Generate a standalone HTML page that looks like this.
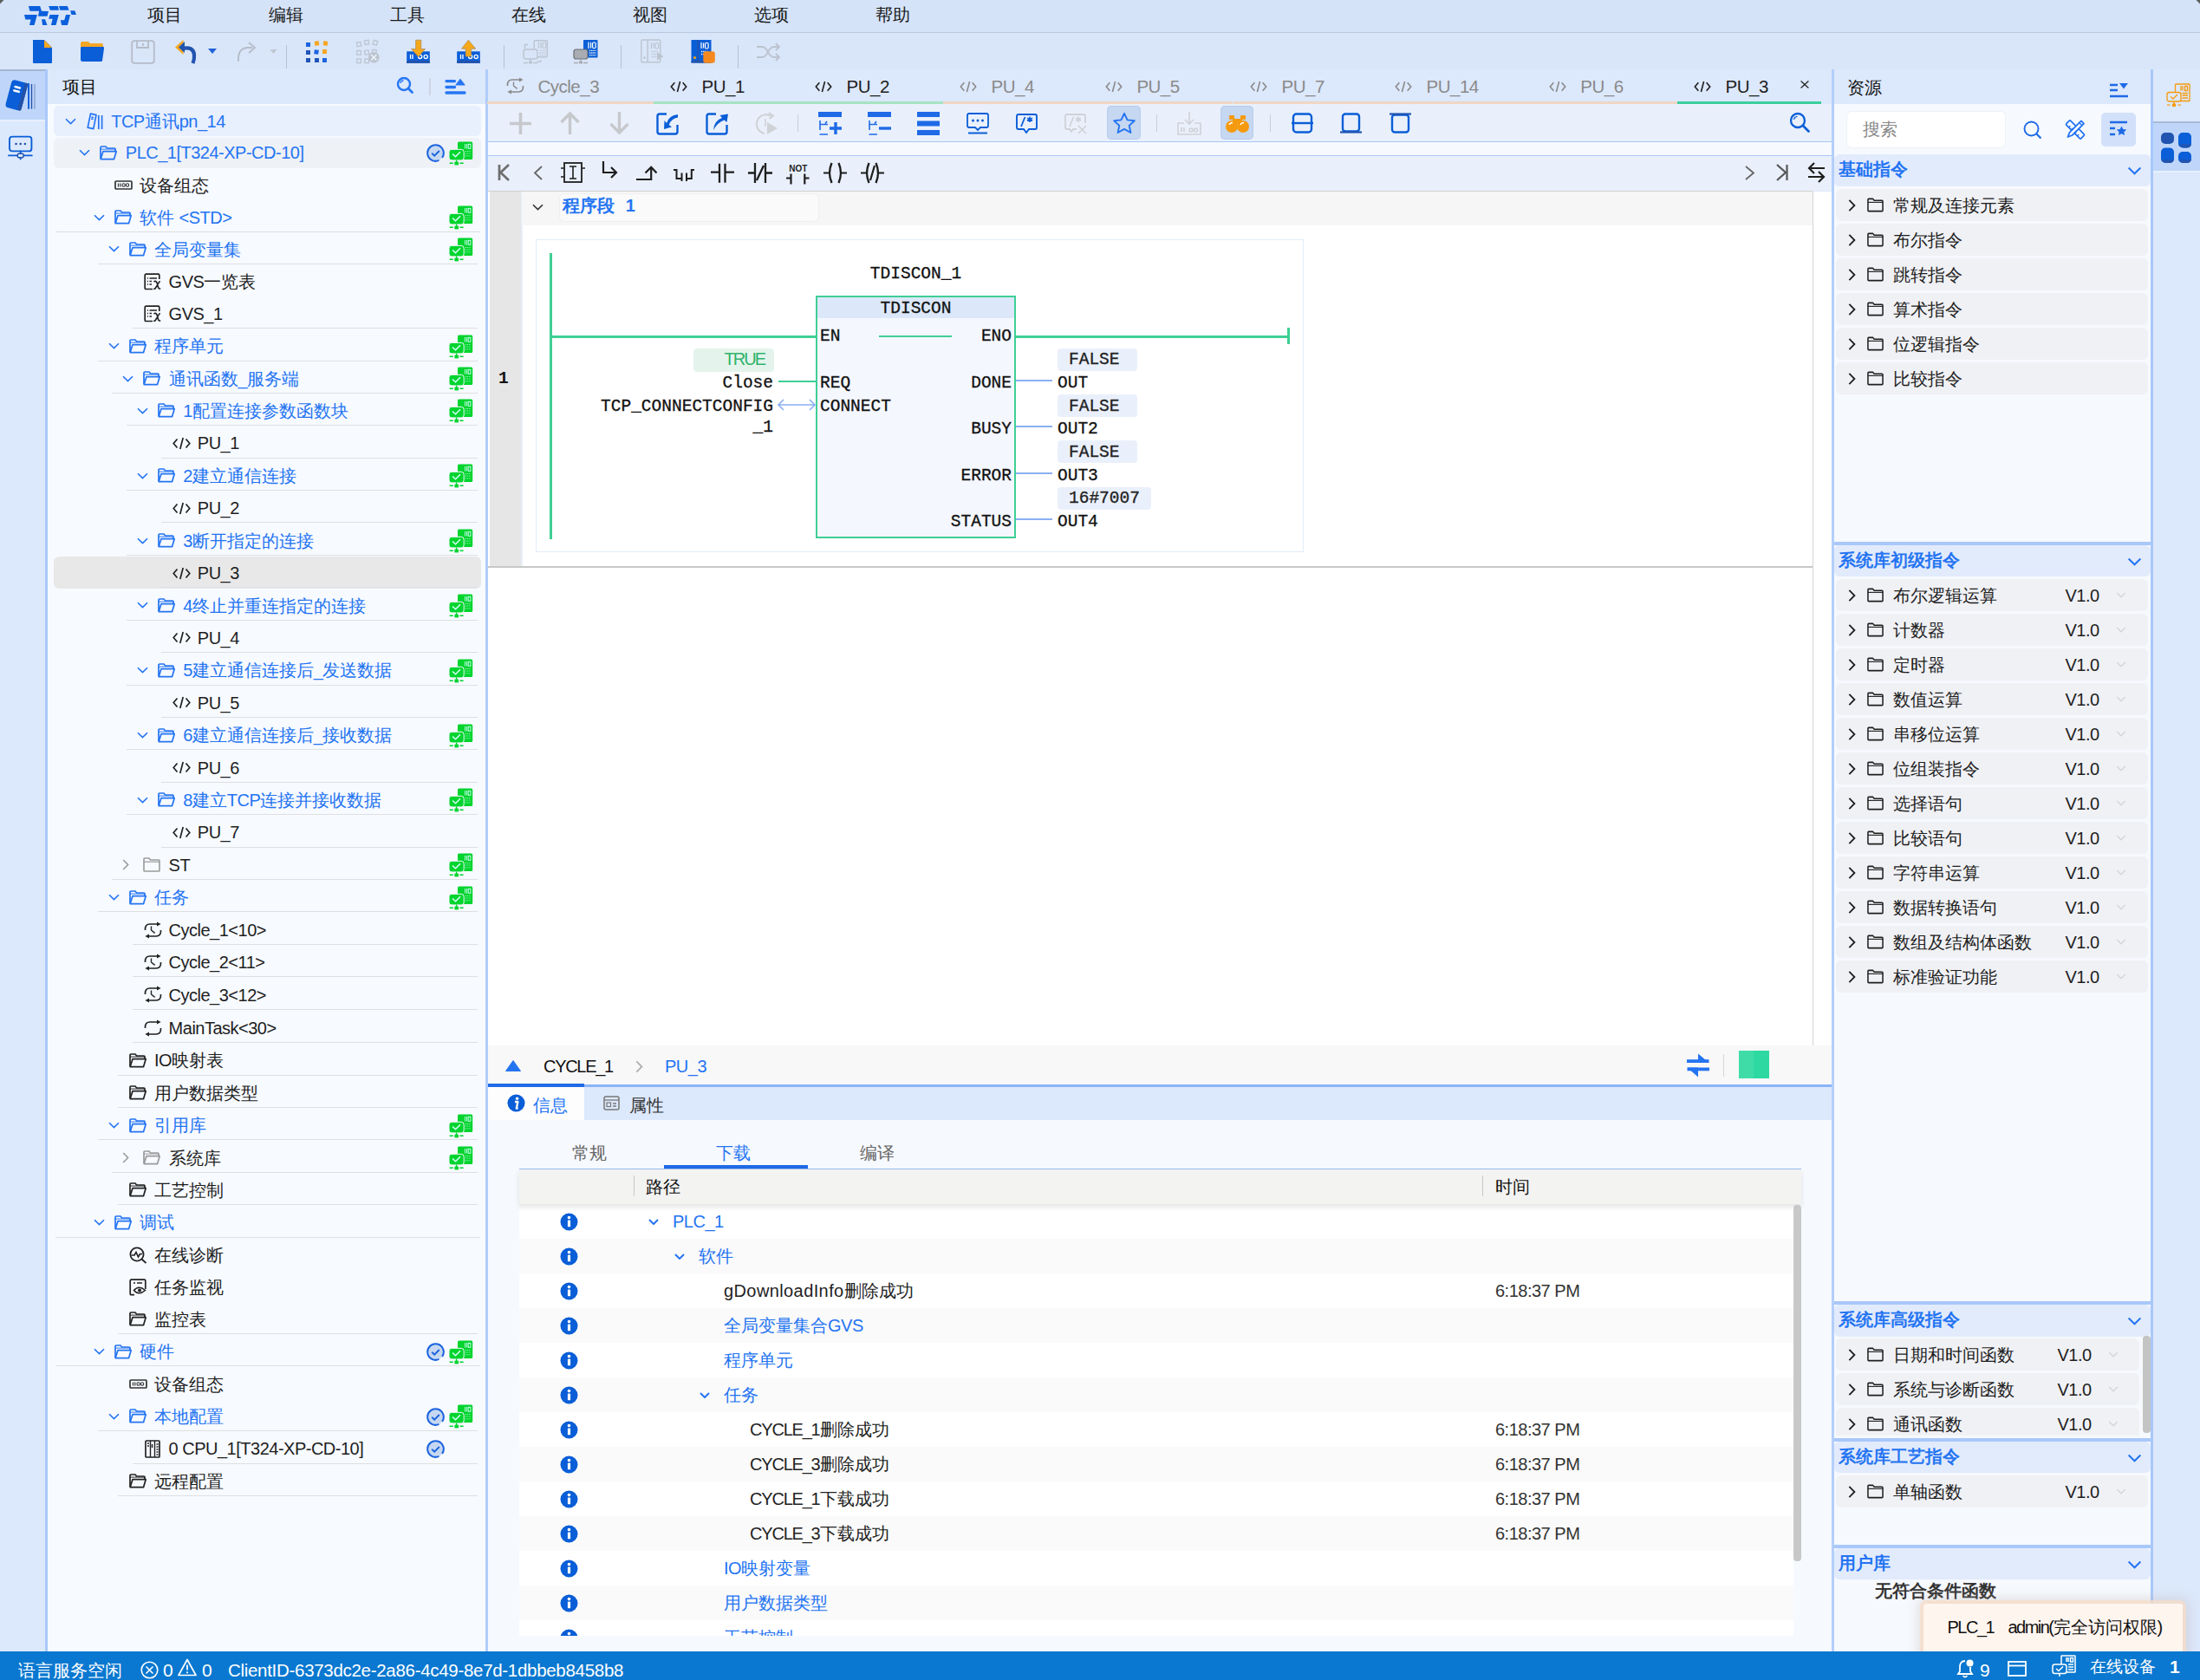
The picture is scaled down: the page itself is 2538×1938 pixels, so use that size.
<!DOCTYPE html><html><head><meta charset="utf-8"><style>
html,body{margin:0;padding:0;}body{width:2538px;height:1938px;overflow:hidden;position:relative;background:#dce8fb;font-family:"Liberation Sans",sans-serif;}
svg{overflow:visible}
</style></head><body>
<svg width="0" height="0" style="position:absolute">
<symbol id="chevd" viewBox="0 0 13 8"><path d="M1 1.2 L6.5 6.6 L12 1.2" fill="none" stroke="currentColor" stroke-width="1.6"/></symbol>
<symbol id="chevd2" viewBox="0 0 12 7"><path d="M1 1 L6 6 L11 1" fill="none" stroke="currentColor" stroke-width="2"/></symbol>
<symbol id="chevr" viewBox="0 0 8 13"><path d="M1.2 1 L6.6 6.5 L1.2 12" fill="none" stroke="currentColor" stroke-width="1.6"/></symbol>
<symbol id="fold_open" viewBox="0 0 20 17"><path d="M1 15 V2.2 Q1 1 2.2 1 H7 L8.6 3 H17 Q18 3 18 4 V6" fill="none" stroke="currentColor" stroke-width="1.7"/><path d="M1 4.2 H17.5 L18 6.2" fill="none" stroke="currentColor" stroke-width="1.7" opacity=".55"/><path d="M1.2 15.6 L4 6.6 H19.2 L16.6 15.6 Z" fill="none" stroke="currentColor" stroke-width="1.7" stroke-linejoin="round"/></symbol>
<symbol id="fold" viewBox="0 0 20 17"><path d="M1 15.2 V2 Q1 1 2 1 H7 L8.6 3 H18 Q19 3 19 4 V15.2 Q19 16 18 16 H2 Q1 16 1 15.2 Z M1 6 H19" fill="none" stroke="currentColor" stroke-width="1.7" stroke-linejoin="round"/></symbol>
<symbol id="fold2" viewBox="0 0 20 17"><path d="M1 15.2 V2 Q1 1 2 1 H7 L8.6 3 H18 Q19 3 19 4 V15.2 Q19 16 18 16 H2 Q1 16 1 15.2 Z" fill="none" stroke="currentColor" stroke-width="1.6" stroke-linejoin="round"/><path d="M1 5.2 H19" stroke="currentColor" stroke-width="1.2"/></symbol>
<symbol id="code" viewBox="0 0 21 15"><path d="M5.5 2.5 L1.2 7.5 L5.5 12.5 M15.5 2.5 L19.8 7.5 L15.5 12.5 M12.2 1 L8.8 14" fill="none" stroke="currentColor" stroke-width="1.7"/></symbol>
<symbol id="proj" viewBox="0 0 19 20"><path d="M4.5 1.2 L11 2.6 L7.8 18.6 L1.2 17.2 Z" fill="none" stroke="currentColor" stroke-width="1.7" stroke-linejoin="round"/><path d="M5.5 5 L8.2 5.6 M5.1 7 L7.8 7.6" stroke="currentColor" stroke-width="1.3"/><path d="M13.8 3 V19 M17.6 3 V19" stroke="currentColor" stroke-width="1.7"/></symbol>
<symbol id="dev" viewBox="0 0 21 11"><rect x="1" y="1" width="19" height="9" rx="1" fill="none" stroke="currentColor" stroke-width="1.7"/><path d="M4.5 3.5 V7.5 M6.8 3.5 V7.5" stroke="currentColor" stroke-width="1.2"/><circle cx="10.6" cy="5.5" r="1.7" fill="none" stroke="currentColor" stroke-width="1.1"/><circle cx="15" cy="5.5" r="1.7" fill="none" stroke="currentColor" stroke-width="1.1"/></symbol>
<symbol id="gvs" viewBox="0 0 21 20"><path d="M10 18.5 H2.5 Q1.2 18.5 1.2 17.2 V2.4 Q1.2 1.2 2.5 1.2 H16.6 Q17.8 1.2 17.8 2.4 V7" fill="none" stroke="currentColor" stroke-width="1.7"/><path d="M4 6 H5 M6.5 6 H15 M4 9.5 H5 M6.5 9.5 H9 M4 13 H5 M6.5 13 H9" stroke="currentColor" stroke-width="1.4"/><path d="M11.5 10 Q13.5 8.5 14.8 10.5 L16.6 16.5 Q17.2 18.6 19.2 17.8 M18.8 9.5 Q17.8 9.8 16.8 11.6 L13.6 17 Q12.6 18.8 11.2 18" fill="none" stroke="currentColor" stroke-width="1.6"/></symbol>
<symbol id="cyc" viewBox="0 0 21 20"><path d="M1.5 10 Q1 3 7 3 H16" fill="none" stroke="currentColor" stroke-width="1.7"/><path d="M15 0.5 L19.6 3 L15 5.6 Z" fill="currentColor"/><path d="M19.5 10 Q20 17 14 17 H5" fill="none" stroke="currentColor" stroke-width="1.7"/><path d="M6 14.4 L1.4 17 L6 19.5 Z" fill="currentColor"/><path d="M8.5 5.5 V10 L12.6 13.4" fill="none" stroke="currentColor" stroke-width="1.4"/></symbol>
<symbol id="cyc2" viewBox="0 0 21 20"><path d="M1.5 10 Q1 3 7 3 H16" fill="none" stroke="currentColor" stroke-width="1.7"/><path d="M15 0.5 L19.6 3 L15 5.6 Z" fill="currentColor"/><path d="M19.5 10 Q20 17 14 17 H5" fill="none" stroke="currentColor" stroke-width="1.7"/><path d="M6 14.4 L1.4 17 L6 19.5 Z" fill="currentColor"/></symbol>
<symbol id="diag" viewBox="0 0 21 20"><circle cx="9" cy="9" r="7.6" fill="none" stroke="currentColor" stroke-width="1.8"/><path d="M2.5 10 L6 10 L8 6.5 L10.5 12 L12.5 8.5 L15 8.5 M14.5 14.5 L19.5 19" fill="none" stroke="currentColor" stroke-width="1.7"/></symbol>
<symbol id="mon" viewBox="0 0 21 20"><path d="M6 18.6 H2.4 Q1.2 18.6 1.2 17.4 V2.4 Q1.2 1.2 2.4 1.2 H17.6 Q18.8 1.2 18.8 2.4 V12" fill="none" stroke="currentColor" stroke-width="1.7"/><path d="M5 5 H7 M9 5 H15" stroke="currentColor" stroke-width="1.4"/><path d="M5.5 13.5 Q11 7 18.5 13.5 Q11 20 5.5 13.5 Z" fill="none" stroke="currentColor" stroke-width="1.6"/><circle cx="12" cy="13.6" r="2" fill="currentColor"/></symbol>
<symbol id="cpu" viewBox="0 0 18 21"><rect x="1" y="1" width="16" height="19" rx="1" fill="none" stroke="currentColor" stroke-width="1.7"/><path d="M6.5 1 V20 M11.5 1 V20" stroke="currentColor" stroke-width="1.4"/><path d="M3 4 H5 M3 7 H5 M13.5 5 H15.5 M13.5 8 H15.5 M13.5 11 H15.5 M13.5 14 H15.5 M13.5 17 H15.5 M8.5 5 V9" stroke="currentColor" stroke-width="1.5"/></symbol>
<symbol id="chk" viewBox="0 0 21 21"><circle cx="10.5" cy="10.5" r="9.3" fill="#c6d8f1"/><path d="M14.43 18.93 A9.3 9.3 0 1 1 18.12 15.83" fill="none" stroke="#1b63df" stroke-width="2"/><path d="M6.2 10.8 L9.2 13.6 L14.8 8" fill="none" stroke="#1b63df" stroke-width="1.9"/></symbol>
<symbol id="online" viewBox="0 0 28 28"><rect x="10" y="0.5" width="17.2" height="20.5" rx="1.6" fill="#00d42e"/><path d="M18.6 3 V8.5 M20.6 3 V8.5" stroke="#dff" stroke-width="0.9"/><rect x="22.2" y="3.3" width="2.7" height="5" fill="none" stroke="#dff" stroke-width="0.9"/><path d="M19 11.5 H25 M19 14 H25 M19 16.8 H25" stroke="#bfc" stroke-width="1" stroke-dasharray="1 1.2"/><rect x="0" y="9.3" width="17.2" height="12.6" rx="3" fill="#00d42e" stroke="#f8f8ff" stroke-width="1"/><path d="M4 14.5 L7.5 17.8 L13 12.2" fill="none" stroke="#d8fff8" stroke-width="1.5"/><path d="M8.6 21.5 V24.2" stroke="#00d42e" stroke-width="1.4"/><rect x="6.4" y="23.6" width="4.6" height="3.8" fill="#00d42e"/><path d="M0.6 25.2 H4.8 M12.4 25.2 H16.6" stroke="#00d42e" stroke-width="1.4"/></symbol>
</svg>
<div style="position:absolute;left:0px;top:0px;width:2538px;height:37px;background:#d5e3f8;"></div>
<div style="position:absolute;left:0px;top:37px;width:2538px;height:1px;background:#b9c8dd;"></div>
<div style="position:absolute;left:0px;top:38px;width:2538px;height:42px;background:#d9e6f9;"></div>
<svg style="position:absolute;left:20px;top:0px;width:80px;height:38px" viewBox="0 0 80 38"><g fill="#0a5fdc"><path d="M12.9 6.9 L26.2 6.9 L28.0 12.7 L36.0 13.1 L34.5 18.7 L24.0 18.7 L25.1 12.7 L14.4 12.7 Z"/><path d="M8.0 17.1 L22.9 17.1 L19.6 28.9 L14.0 28.9 L15.6 22.4 L9.3 22.4 Z"/><path d="M28.0 22.2 L32.0 22.2 L34.5 28.9 L29.1 28.9 Z"/><path d="M36.2 6.9 L46.9 6.9 L48.0 11.8 L37.8 11.8 Z"/><path d="M37.5 17.1 L47.8 17.1 L44.5 28.9 L38.9 28.9 L40.7 21.8 L36.2 21.8 Z"/><path d="M48.0 6.9 L57.8 6.9 L59.6 11.8 L49.3 11.8 Z"/><path d="M56.0 17.1 L61.1 17.1 L58.0 28.9 L51.1 28.9 L49.8 23.3 L54.2 23.3 Z"/><path d="M61.1 12.2 L66.2 12.2 L68.0 16.9 L62.5 16.9 Z"/></g></svg>
<div style="position:absolute;left:170px;top:1.6px;line-height:30.0px;font-size:20px;color:#1a1a1a;white-space:nowrap;font-family:'Liberation Sans', sans-serif;">项目</div>
<div style="position:absolute;left:310px;top:1.6px;line-height:30.0px;font-size:20px;color:#1a1a1a;white-space:nowrap;font-family:'Liberation Sans', sans-serif;">编辑</div>
<div style="position:absolute;left:450px;top:1.6px;line-height:30.0px;font-size:20px;color:#1a1a1a;white-space:nowrap;font-family:'Liberation Sans', sans-serif;">工具</div>
<div style="position:absolute;left:590px;top:1.6px;line-height:30.0px;font-size:20px;color:#1a1a1a;white-space:nowrap;font-family:'Liberation Sans', sans-serif;">在线</div>
<div style="position:absolute;left:730px;top:1.6px;line-height:30.0px;font-size:20px;color:#1a1a1a;white-space:nowrap;font-family:'Liberation Sans', sans-serif;">视图</div>
<div style="position:absolute;left:870px;top:1.6px;line-height:30.0px;font-size:20px;color:#1a1a1a;white-space:nowrap;font-family:'Liberation Sans', sans-serif;">选项</div>
<div style="position:absolute;left:1010px;top:1.6px;line-height:30.0px;font-size:20px;color:#1a1a1a;white-space:nowrap;font-family:'Liberation Sans', sans-serif;">帮助</div>

<svg style="position:absolute;left:36px;top:45px;width:26px;height:29px" viewBox="0 0 26 29"><path d="M2 1 H15 L24 10 V27 Q24 28 23 28 H3 Q2 28 2 27 Z" fill="#0a5ed7"/><path d="M15 1 L24 10 H15 Z" fill="#f5a623"/></svg>
<svg style="position:absolute;left:92px;top:47px;width:29px;height:25px" viewBox="0 0 29 25"><path d="M1 3 Q1 1 3 1 H10 L12 3 H25 Q27 3 27 5 V8 H1 Z" fill="#f5a623"/><path d="M2 7 H27 Q28.5 7 28 9 L26 23 Q25.7 24 24.5 24 H3 Q1 24 1 22 V9 Q1 7 2 7 Z" fill="#0a5ed7"/></svg>
<svg style="position:absolute;left:151px;top:46px;width:28px;height:28px" viewBox="0 0 28 28"><rect x="1.2" y="1.2" width="25.6" height="25.6" rx="3" fill="none" stroke="#b5bcc8" stroke-width="1.8"/><path d="M7 1.5 V9 H20 V1.5 M14 4 V7" fill="none" stroke="#b5bcc8" stroke-width="1.8"/></svg>
<svg style="position:absolute;left:202px;top:45px;width:26px;height:28px" viewBox="0 0 26 28"><path d="M8 11 Q21 8 22 18 Q22.5 23 20.5 28" fill="none" stroke="#2154b0" stroke-width="4.2"/><path d="M0 9.5 L9.5 1 V18 Z" fill="#f5a623"/><path d="M4 9.5 L11 3 V16 Z" fill="#2154b0"/></svg>
<svg style="position:absolute;left:240px;top:56px;width:10px;height:6px" viewBox="0 0 10 6"><path d="M0 0 H10 L5 6 Z" fill="#1f62d6"/></svg>
<svg style="position:absolute;left:273px;top:46px;width:25px;height:26px" viewBox="0 0 25 26"><path d="M2 25 Q1 10 12 9 H18 M14 3 L21 9 L14 15" fill="none" stroke="#b5bcc8" stroke-width="1.8"/></svg>
<svg style="position:absolute;left:311px;top:57px;width:9px;height:5px" viewBox="0 0 10 6"><path d="M0 0 H10 L5 6 Z" fill="#c0c7d2"/></svg>
<div style="position:absolute;left:330px;top:52px;width:1px;height:27px;background:#b5c2d6"></div>
<svg style="position:absolute;left:352px;top:46px;width:28px;height:27px" viewBox="0 0 28 27"><g fill="#1f55b8"><rect x="1" y="12" width="5" height="5"/><rect x="1" y="21" width="5" height="5"/><rect x="11" y="21" width="5" height="5"/></g><g fill="#1c64e0"><rect x="1" y="3" width="5" height="5"/><rect x="10.5" y="11.5" width="5" height="5" transform="rotate(8 13 14)"/><rect x="20" y="21" width="5" height="5"/></g><g fill="#f5a623"><rect x="11" y="1.5" width="5" height="5" transform="rotate(-10 13.5 4)"/><rect x="21" y="1.5" width="5" height="5" transform="rotate(10 23.5 4)"/><rect x="20" y="11" width="5" height="5"/></g></svg>
<svg style="position:absolute;left:411px;top:45px;width:28px;height:29px" viewBox="0 0 28 29" fill="none" stroke="#bcc4d0" stroke-width="1.3"><rect x="0.8" y="3.8" width="4.6" height="4.6" transform="rotate(-8 3 6)"/><rect x="9.8" y="1.6" width="4.6" height="4.6" transform="rotate(-8 12 4)"/><rect x="19.5" y="2" width="4.6" height="4.6" transform="rotate(18 22 4.5)"/><rect x="0.8" y="13.5" width="4.6" height="4.6"/><rect x="9.8" y="13.2" width="4.6" height="4.6" transform="rotate(-8 12 15.5)"/><rect x="18.5" y="12.5" width="4.6" height="4.6"/><rect x="0.8" y="23" width="4.6" height="4.6"/><rect x="9.8" y="23" width="4.6" height="4.6"/><circle cx="20.3" cy="21.3" r="6.3" fill="#bcc4d0" stroke="none"/><path d="M17.3 18.3 L23.3 24.3 M23.3 18.3 L17.3 24.3" stroke="#eef3fb" stroke-width="1.6"/></svg>
<svg style="position:absolute;left:468px;top:45px;width:29px;height:29px" viewBox="0 0 29 29"><rect x="1.2" y="14.3" width="26.6" height="13.5" fill="#0a5ed7"/><rect x="1.2" y="25.1" width="26.6" height="2.7" fill="#2352a8"/><path d="M5.5 17.8 V23 M8 17.8 V23" stroke="#fff" stroke-width="1.3"/><circle cx="16.6" cy="20.4" r="2.1" fill="none" stroke="#fff" stroke-width="1.3"/><circle cx="23.2" cy="20.4" r="2.1" fill="none" stroke="#fff" stroke-width="1.3"/><path d="M11.6 1.2 H17.8 V11.5 H22.5 L14.7 20.5 L6.5 11.5 H11.6 Z" fill="#f5a818" stroke="#a88a5c" stroke-width="0.7"/></svg>
<svg style="position:absolute;left:527px;top:45px;width:29px;height:29px" viewBox="0 0 29 29"><rect x="0.2" y="14.3" width="26.6" height="13.5" fill="#0a5ed7"/><rect x="0.2" y="25.1" width="26.6" height="2.7" fill="#2352a8"/><path d="M4.5 17.8 V23 M7 17.8 V23" stroke="#fff" stroke-width="1.3"/><circle cx="15.6" cy="20.4" r="2.1" fill="none" stroke="#fff" stroke-width="1.3"/><circle cx="22.2" cy="20.4" r="2.1" fill="none" stroke="#fff" stroke-width="1.3"/><path d="M10.2 20.1 H16.6 V11.2 H21.8 L13.3 1.2 L5.5 11.2 H10.2 Z" fill="#f5a818" stroke="#a88a5c" stroke-width="0.7"/></svg>
<div style="position:absolute;left:581px;top:52px;width:1px;height:27px;background:#b5c2d6"></div>
<svg style="position:absolute;left:603px;top:45px;width:30px;height:30px" viewBox="0 0 30 30"><rect x="13.2" y="1.7" width="15.1" height="19.1" rx="1" fill="none" stroke="#bcc4d0" stroke-width="1.4"/><path d="M18.5 3.5 V11 M21.1 4 V10.5" stroke="#bcc4d0" stroke-width="1.2"/><rect x="23.1" y="4" width="3.6" height="6.5" rx="1.2" fill="none" stroke="#bcc4d0" stroke-width="1.2"/><path d="M19.5 13.3 H27.0 M19.5 16 H27.0 M19.5 18.7 H27.0" stroke="#bcc4d0" stroke-width="1.3" stroke-dasharray="1.3 0.9"/><path d="M2.5 11 V6.5 H6" fill="none" stroke="#bcc4d0" stroke-width="1.4"/><path d="M21 24.5 V26 H16.5" fill="none" stroke="#bcc4d0" stroke-width="1.4"/><rect x="1" y="12" width="16" height="11" rx="2.5" fill="#d8e5f8" stroke="#bcc4d0" stroke-width="1.4"/><path d="M9 23 V26 M1 27.5 H6 M12 27.5 H17" stroke="#bcc4d0" stroke-width="1.4"/><rect x="7" y="25.5" width="4" height="3" fill="#bcc4d0"/></svg>
<svg style="position:absolute;left:661px;top:45px;width:30px;height:30px" viewBox="0 0 30 30"><rect x="12" y="1" width="16.5" height="20.5" rx="0.8" fill="#0a5ed7"/><path d="M18 3.5 V11 M20.6 4 V10.5" stroke="#fff" stroke-width="1.2"/><rect x="22.6" y="4" width="3.6" height="6.5" rx="1.2" fill="none" stroke="#fff" stroke-width="1.2"/><path d="M19 13.3 H26.5 M19 16 H26.5 M19 18.7 H26.5" stroke="#fff" stroke-width="1.3" stroke-dasharray="1.3 0.9"/><rect x="1" y="12" width="16" height="11" rx="2.5" fill="#a9acb3" stroke="#6b6f77" stroke-width="1.2"/><path d="M9 23 V26 M1 27.5 H6 M12 27.5 H17" stroke="#a9acb3" stroke-width="1.4"/><rect x="7" y="25.5" width="4" height="3" fill="#a9acb3"/></svg>
<div style="position:absolute;left:716px;top:52px;width:1px;height:27px;background:#b5c2d6"></div>
<svg style="position:absolute;left:739px;top:45px;width:30px;height:30px" viewBox="0 0 30 30"><rect x="0.8" y="1" width="22" height="25.8" rx="1.2" fill="none" stroke="#bcc4d0" stroke-width="1.4"/><path d="M8.2 1 V26.8" stroke="#bcc4d0" stroke-width="1.4"/><path d="M12.5 4 V11 M15 4.5 V10.5" stroke="#bcc4d0" stroke-width="1.2"/><rect x="17" y="4.5" width="3.6" height="6.5" rx="1.2" fill="none" stroke="#bcc4d0" stroke-width="1.2"/><path d="M12.5 14.5 H20 M12.5 17.5 H20 M12.5 20.5 H20" stroke="#bcc4d0" stroke-width="1.3" stroke-dasharray="1.3 0.9"/><circle cx="4.5" cy="21.5" r="1.3" fill="#bcc4d0"/><path d="M19 15 L26.5 20 L19 25 Z" fill="#bcc4d0"/></svg>
<svg style="position:absolute;left:797px;top:45px;width:30px;height:30px" viewBox="0 0 30 30"><rect x="0.5" y="1" width="23" height="26.5" fill="#0a5ed7"/><rect x="0.5" y="25" width="23" height="2.5" fill="#2352a8"/><path d="M8.2 1 V27" stroke="#2a4f9a" stroke-width="1.2"/><path d="M12 4 V11 M14.5 4.5 V10.5" stroke="#fff" stroke-width="1.2"/><rect x="16.5" y="4.5" width="3.6" height="6.5" rx="1.2" fill="none" stroke="#fff" stroke-width="1.2"/><path d="M12 14.5 H19.5 M12 17.5 H19.5" stroke="#fff" stroke-width="1.3" stroke-dasharray="1.3 0.9"/><circle cx="4.5" cy="21.5" r="1.6" fill="#f5a818"/><rect x="14.3" y="14.3" width="13.5" height="13.5" rx="3" fill="#f5891f"/></svg>
<div style="position:absolute;left:851px;top:52px;width:1px;height:27px;background:#b5c2d6"></div>
<svg style="position:absolute;left:873px;top:49px;width:28px;height:22px" viewBox="0 0 28 22" fill="none" stroke="#bcc3cf" stroke-width="1.8"><path d="M0 5 H6 Q10 5 13 11 Q16 17 20 17 H25 M0 17 H6 Q10 17 13 11 Q16 5 20 5 H25"/><path d="M22 1 L26 5 L22 9 M22 13 L26 17 L22 21"/></svg>

<div style="position:absolute;left:0px;top:80px;width:52px;height:1825px;background:#dce9fd;"></div>
<div style="position:absolute;left:0px;top:80px;width:52px;height:58px;background:#bfd6fa;"></div>
<div style="position:absolute;left:0px;top:80px;width:52px;height:1.5px;background:#a3b6d2;"></div>
<div style="position:absolute;left:0px;top:138px;width:52px;height:2px;background:#e8f0fd;"></div>
<svg style="position:absolute;left:0px;top:80px;width:52px;height:60px" viewBox="0 0 52 60"><g transform="rotate(15 18 30)"><rect x="9.5" y="13" width="19" height="33" rx="4" fill="#0a5ed7"/><rect x="24.5" y="13" width="4" height="33" rx="2" fill="#2352a8"/><path d="M15 20.5 H20.5 M15 25 H20.5" stroke="#fff" stroke-width="2.6" stroke-linecap="round"/></g><path d="M33 16 V45.7" stroke="#0a5ed7" stroke-width="1.9"/><path d="M36.5 17 V45.7" stroke="#2352a8" stroke-width="1.4"/><path d="M40 17 V45.7" stroke="#8ea6cf" stroke-width="1.5"/></svg>
<svg style="position:absolute;left:9px;top:156px;width:30px;height:30px" viewBox="0 0 30 30"><rect x="2" y="1.6" width="25.4" height="16.8" rx="3" fill="none" stroke="#0a5ed7" stroke-width="1.9"/><circle cx="9.5" cy="10" r="1.3" fill="#2352a8"/><circle cx="14.7" cy="10" r="1.3" fill="#2352a8"/><circle cx="19.9" cy="10" r="1.3" fill="#2352a8"/><path d="M14.7 18.5 V27.5 M1 23.4 H27.8" stroke="#0a5ed7" stroke-width="1.9" stroke-linecap="round"/><rect x="11.3" y="21.2" width="6.8" height="4.6" rx="1.5" fill="#dce9fd" stroke="#2352a8" stroke-width="1.5"/></svg>
<div style="position:absolute;left:52px;top:80px;width:3px;height:1825px;background:#a9c8fb;"></div>
<div style="position:absolute;left:55px;top:80px;width:505px;height:1825px;background:#f7faff;"></div>
<div style="position:absolute;left:55px;top:80px;width:505px;height:40px;background:#dce8fb;"></div>
<div style="position:absolute;left:72px;top:85.0px;line-height:30.0px;font-size:20px;color:#111;white-space:nowrap;font-family:'Liberation Sans', sans-serif;">项目</div>
<svg style="position:absolute;left:457px;top:88px;width:20px;height:20px" viewBox="0 0 20 20"><circle cx="9" cy="9" r="7" fill="none" stroke="#2676f3" stroke-width="2.4"/><path d="M14 14 L18.5 18.5" stroke="#2676f3" stroke-width="2.8" stroke-linecap="round"/><path d="M5 8 Q5.5 5.2 8.5 4.8" fill="none" stroke="#2676f3" stroke-width="1.4"/></svg>
<div style="position:absolute;left:494.5px;top:90px;width:2.5px;height:20px;background:#cdd5e3;"></div>
<svg style="position:absolute;left:515px;top:90px;width:22px;height:19px" viewBox="0 0 22 19"><path d="M0 3.6 H9.5 M0 10.5 H9.5 M0 17 H21" stroke="#2676f3" stroke-width="3.4" stroke-linecap="round"/><path d="M11 8 L16 1.5 L21 8 Z" fill="#2676f3" stroke="#2676f3" stroke-width="1.2" stroke-linejoin="round"/></svg>
<div style="position:absolute;left:62px;top:122px;width:493px;height:35px;background:#e8effd;border-radius:6px;"></div>
<svg style="position:absolute;left:74.69999999999999px;top:136.23000000000002px;width:13px;height:8px;color:#2474f2;"><use href="#chevd"/></svg>
<svg style="position:absolute;left:99.69999999999999px;top:129.73000000000002px;width:19px;height:20px;color:#2474f2;"><use href="#proj"/></svg>
<div style="position:absolute;left:128.2px;top:125.2px;line-height:30.0px;font-size:20px;color:#2474f2;white-space:nowrap;font-family:'Liberation Sans', sans-serif;"><span style="letter-spacing:-0.5px">TCP</span>通讯<span style="letter-spacing:-0.5px">pn_14</span></div>
<div style="position:absolute;left:62px;top:159px;width:493px;height:35px;background:#eef1f6;border-radius:6px;"></div>
<svg style="position:absolute;left:91.29999999999998px;top:172.347px;width:13px;height:8px;color:#2474f2;"><use href="#chevd"/></svg>
<svg style="position:absolute;left:115.29999999999998px;top:167.847px;width:20px;height:17px;color:#2474f2;"><use href="#fold_open"/></svg>
<div style="position:absolute;left:144.79999999999998px;top:161.3px;line-height:30.0px;font-size:20px;color:#2474f2;white-space:nowrap;font-family:'Liberation Sans', sans-serif;"><span style="letter-spacing:-0.5px">PLC_1[T324-XP-CD-10]</span></div>
<svg style="position:absolute;left:491.5px;top:166.347px;width:21px;height:21px;color:#222;"><use href="#chk"/></svg>
<svg style="position:absolute;left:517.5px;top:162.847px;width:28px;height:28px;color:#222;"><use href="#online"/></svg>
<svg style="position:absolute;left:131.89999999999998px;top:208.06400000000002px;width:21px;height:11px;color:#333;"><use href="#dev"/></svg>
<div style="position:absolute;left:161.39999999999998px;top:198.6px;line-height:30.0px;font-size:20px;color:#1e1e1e;white-space:nowrap;font-family:'Liberation Sans', sans-serif;">设备组态</div>
<div style="position:absolute;left:64px;top:267px;width:490px;height:1px;background:#dedfe2;"></div>
<svg style="position:absolute;left:107.89999999999998px;top:246.88100000000003px;width:13px;height:8px;color:#2474f2;"><use href="#chevd"/></svg>
<svg style="position:absolute;left:131.89999999999998px;top:242.38100000000003px;width:20px;height:17px;color:#2474f2;"><use href="#fold_open"/></svg>
<div style="position:absolute;left:161.39999999999998px;top:235.9px;line-height:30.0px;font-size:20px;color:#2474f2;white-space:nowrap;font-family:'Liberation Sans', sans-serif;">软件<span style="letter-spacing:-0.5px"> &lt;STD&gt;</span></div>
<svg style="position:absolute;left:517.5px;top:237.38100000000003px;width:28px;height:28px;color:#222;"><use href="#online"/></svg>
<div style="position:absolute;left:113px;top:304px;width:438px;height:1px;background:#dedfe2;"></div>
<svg style="position:absolute;left:124.5px;top:283.49800000000005px;width:13px;height:8px;color:#2474f2;"><use href="#chevd"/></svg>
<svg style="position:absolute;left:148.5px;top:278.99800000000005px;width:20px;height:17px;color:#2474f2;"><use href="#fold_open"/></svg>
<div style="position:absolute;left:178.0px;top:272.5px;line-height:30.0px;font-size:20px;color:#2474f2;white-space:nowrap;font-family:'Liberation Sans', sans-serif;">全局变量集</div>
<svg style="position:absolute;left:517.5px;top:273.99800000000005px;width:28px;height:28px;color:#222;"><use href="#online"/></svg>
<svg style="position:absolute;left:165.6px;top:314.815px;width:21px;height:20px;color:#222;"><use href="#gvs"/></svg>
<div style="position:absolute;left:194.6px;top:309.8px;line-height:30.0px;font-size:20px;color:#1e1e1e;white-space:nowrap;font-family:'Liberation Sans', sans-serif;"><span style="letter-spacing:-0.5px">GVS</span>一览表</div>
<div style="position:absolute;left:153px;top:378px;width:398px;height:1px;background:#dedfe2;"></div>
<svg style="position:absolute;left:165.6px;top:352.132px;width:21px;height:20px;color:#222;"><use href="#gvs"/></svg>
<div style="position:absolute;left:194.6px;top:347.1px;line-height:30.0px;font-size:20px;color:#1e1e1e;white-space:nowrap;font-family:'Liberation Sans', sans-serif;"><span style="letter-spacing:-0.5px">GVS_1</span></div>
<div style="position:absolute;left:113px;top:416px;width:438px;height:1px;background:#dedfe2;"></div>
<svg style="position:absolute;left:124.5px;top:395.449px;width:13px;height:8px;color:#2474f2;"><use href="#chevd"/></svg>
<svg style="position:absolute;left:148.5px;top:390.949px;width:20px;height:17px;color:#2474f2;"><use href="#fold_open"/></svg>
<div style="position:absolute;left:178.0px;top:384.4px;line-height:30.0px;font-size:20px;color:#2474f2;white-space:nowrap;font-family:'Liberation Sans', sans-serif;">程序单元</div>
<svg style="position:absolute;left:517.5px;top:385.949px;width:28px;height:28px;color:#222;"><use href="#online"/></svg>
<div style="position:absolute;left:129px;top:453px;width:422px;height:1px;background:#dedfe2;"></div>
<svg style="position:absolute;left:141.1px;top:432.56600000000003px;width:13px;height:8px;color:#2474f2;"><use href="#chevd"/></svg>
<svg style="position:absolute;left:165.1px;top:428.06600000000003px;width:20px;height:17px;color:#2474f2;"><use href="#fold_open"/></svg>
<div style="position:absolute;left:194.6px;top:421.6px;line-height:30.0px;font-size:20px;color:#2474f2;white-space:nowrap;font-family:'Liberation Sans', sans-serif;">通讯函数<span style="letter-spacing:-0.5px">_</span>服务端</div>
<svg style="position:absolute;left:517.5px;top:423.06600000000003px;width:28px;height:28px;color:#222;"><use href="#online"/></svg>
<div style="position:absolute;left:146px;top:490px;width:405px;height:1px;background:#dedfe2;"></div>
<svg style="position:absolute;left:157.7px;top:469.98300000000006px;width:13px;height:8px;color:#2474f2;"><use href="#chevd"/></svg>
<svg style="position:absolute;left:181.7px;top:465.48300000000006px;width:20px;height:17px;color:#2474f2;"><use href="#fold_open"/></svg>
<div style="position:absolute;left:211.2px;top:459.0px;line-height:30.0px;font-size:20px;color:#2474f2;white-space:nowrap;font-family:'Liberation Sans', sans-serif;"><span style="letter-spacing:-0.5px">1</span>配置连接参数函数块</div>
<svg style="position:absolute;left:517.5px;top:460.48300000000006px;width:28px;height:28px;color:#222;"><use href="#online"/></svg>
<div style="position:absolute;left:186px;top:528px;width:365px;height:1px;background:#dedfe2;"></div>
<svg style="position:absolute;left:198.8px;top:503.90000000000003px;width:21px;height:15px;color:#222;"><use href="#code"/></svg>
<div style="position:absolute;left:227.8px;top:496.4px;line-height:30.0px;font-size:20px;color:#1e1e1e;white-space:nowrap;font-family:'Liberation Sans', sans-serif;"><span style="letter-spacing:-0.5px">PU_1</span></div>
<div style="position:absolute;left:146px;top:565px;width:405px;height:1px;background:#dedfe2;"></div>
<svg style="position:absolute;left:157.7px;top:544.817px;width:13px;height:8px;color:#2474f2;"><use href="#chevd"/></svg>
<svg style="position:absolute;left:181.7px;top:540.317px;width:20px;height:17px;color:#2474f2;"><use href="#fold_open"/></svg>
<div style="position:absolute;left:211.2px;top:533.8px;line-height:30.0px;font-size:20px;color:#2474f2;white-space:nowrap;font-family:'Liberation Sans', sans-serif;"><span style="letter-spacing:-0.5px">2</span>建立通信连接</div>
<svg style="position:absolute;left:517.5px;top:535.317px;width:28px;height:28px;color:#222;"><use href="#online"/></svg>
<div style="position:absolute;left:186px;top:602px;width:365px;height:1px;background:#dedfe2;"></div>
<svg style="position:absolute;left:198.8px;top:578.7339999999999px;width:21px;height:15px;color:#222;"><use href="#code"/></svg>
<div style="position:absolute;left:227.8px;top:571.2px;line-height:30.0px;font-size:20px;color:#1e1e1e;white-space:nowrap;font-family:'Liberation Sans', sans-serif;"><span style="letter-spacing:-0.5px">PU_2</span></div>
<div style="position:absolute;left:146px;top:640px;width:405px;height:1px;background:#dedfe2;"></div>
<svg style="position:absolute;left:157.7px;top:619.6510000000001px;width:13px;height:8px;color:#2474f2;"><use href="#chevd"/></svg>
<svg style="position:absolute;left:181.7px;top:615.1510000000001px;width:20px;height:17px;color:#2474f2;"><use href="#fold_open"/></svg>
<div style="position:absolute;left:211.2px;top:608.7px;line-height:30.0px;font-size:20px;color:#2474f2;white-space:nowrap;font-family:'Liberation Sans', sans-serif;"><span style="letter-spacing:-0.5px">3</span>断开指定的连接</div>
<svg style="position:absolute;left:517.5px;top:610.1510000000001px;width:28px;height:28px;color:#222;"><use href="#online"/></svg>
<div style="position:absolute;left:62px;top:642px;width:493px;height:37px;background:#e8e8e8;border-radius:6px;"></div>
<div style="position:absolute;left:186px;top:677px;width:365px;height:1px;background:#dedfe2;"></div>
<svg style="position:absolute;left:198.8px;top:653.568px;width:21px;height:15px;color:#222;"><use href="#code"/></svg>
<div style="position:absolute;left:227.8px;top:646.1px;line-height:30.0px;font-size:20px;color:#1e1e1e;white-space:nowrap;font-family:'Liberation Sans', sans-serif;"><span style="letter-spacing:-0.5px">PU_3</span></div>
<div style="position:absolute;left:146px;top:715px;width:405px;height:1px;background:#dedfe2;"></div>
<svg style="position:absolute;left:157.7px;top:694.4849999999999px;width:13px;height:8px;color:#2474f2;"><use href="#chevd"/></svg>
<svg style="position:absolute;left:181.7px;top:689.9849999999999px;width:20px;height:17px;color:#2474f2;"><use href="#fold_open"/></svg>
<div style="position:absolute;left:211.2px;top:683.5px;line-height:30.0px;font-size:20px;color:#2474f2;white-space:nowrap;font-family:'Liberation Sans', sans-serif;"><span style="letter-spacing:-0.5px">4</span>终止并重连指定的连接</div>
<svg style="position:absolute;left:517.5px;top:684.9849999999999px;width:28px;height:28px;color:#222;"><use href="#online"/></svg>
<div style="position:absolute;left:186px;top:752px;width:365px;height:1px;background:#dedfe2;"></div>
<svg style="position:absolute;left:198.8px;top:728.402px;width:21px;height:15px;color:#222;"><use href="#code"/></svg>
<div style="position:absolute;left:227.8px;top:720.9px;line-height:30.0px;font-size:20px;color:#1e1e1e;white-space:nowrap;font-family:'Liberation Sans', sans-serif;"><span style="letter-spacing:-0.5px">PU_4</span></div>
<div style="position:absolute;left:146px;top:790px;width:405px;height:1px;background:#dedfe2;"></div>
<svg style="position:absolute;left:157.7px;top:769.319px;width:13px;height:8px;color:#2474f2;"><use href="#chevd"/></svg>
<svg style="position:absolute;left:181.7px;top:764.819px;width:20px;height:17px;color:#2474f2;"><use href="#fold_open"/></svg>
<div style="position:absolute;left:211.2px;top:758.3px;line-height:30.0px;font-size:20px;color:#2474f2;white-space:nowrap;font-family:'Liberation Sans', sans-serif;"><span style="letter-spacing:-0.5px">5</span>建立通信连接后<span style="letter-spacing:-0.5px">_</span>发送数据</div>
<svg style="position:absolute;left:517.5px;top:759.819px;width:28px;height:28px;color:#222;"><use href="#online"/></svg>
<div style="position:absolute;left:186px;top:827px;width:365px;height:1px;background:#dedfe2;"></div>
<svg style="position:absolute;left:198.8px;top:803.2360000000001px;width:21px;height:15px;color:#222;"><use href="#code"/></svg>
<div style="position:absolute;left:227.8px;top:795.7px;line-height:30.0px;font-size:20px;color:#1e1e1e;white-space:nowrap;font-family:'Liberation Sans', sans-serif;"><span style="letter-spacing:-0.5px">PU_5</span></div>
<div style="position:absolute;left:146px;top:864px;width:405px;height:1px;background:#dedfe2;"></div>
<svg style="position:absolute;left:157.7px;top:844.153px;width:13px;height:8px;color:#2474f2;"><use href="#chevd"/></svg>
<svg style="position:absolute;left:181.7px;top:839.653px;width:20px;height:17px;color:#2474f2;"><use href="#fold_open"/></svg>
<div style="position:absolute;left:211.2px;top:833.2px;line-height:30.0px;font-size:20px;color:#2474f2;white-space:nowrap;font-family:'Liberation Sans', sans-serif;"><span style="letter-spacing:-0.5px">6</span>建立通信连接后<span style="letter-spacing:-0.5px">_</span>接收数据</div>
<svg style="position:absolute;left:517.5px;top:834.653px;width:28px;height:28px;color:#222;"><use href="#online"/></svg>
<div style="position:absolute;left:186px;top:902px;width:365px;height:1px;background:#dedfe2;"></div>
<svg style="position:absolute;left:198.8px;top:878.0699999999999px;width:21px;height:15px;color:#222;"><use href="#code"/></svg>
<div style="position:absolute;left:227.8px;top:870.6px;line-height:30.0px;font-size:20px;color:#1e1e1e;white-space:nowrap;font-family:'Liberation Sans', sans-serif;"><span style="letter-spacing:-0.5px">PU_6</span></div>
<div style="position:absolute;left:146px;top:939px;width:405px;height:1px;background:#dedfe2;"></div>
<svg style="position:absolute;left:157.7px;top:918.9870000000001px;width:13px;height:8px;color:#2474f2;"><use href="#chevd"/></svg>
<svg style="position:absolute;left:181.7px;top:914.4870000000001px;width:20px;height:17px;color:#2474f2;"><use href="#fold_open"/></svg>
<div style="position:absolute;left:211.2px;top:908.0px;line-height:30.0px;font-size:20px;color:#2474f2;white-space:nowrap;font-family:'Liberation Sans', sans-serif;"><span style="letter-spacing:-0.5px">8</span>建立<span style="letter-spacing:-0.5px">TCP</span>连接并接收数据</div>
<svg style="position:absolute;left:517.5px;top:909.4870000000001px;width:28px;height:28px;color:#222;"><use href="#online"/></svg>
<div style="position:absolute;left:186px;top:977px;width:365px;height:1px;background:#dedfe2;"></div>
<svg style="position:absolute;left:198.8px;top:952.904px;width:21px;height:15px;color:#222;"><use href="#code"/></svg>
<div style="position:absolute;left:227.8px;top:945.4px;line-height:30.0px;font-size:20px;color:#1e1e1e;white-space:nowrap;font-family:'Liberation Sans', sans-serif;"><span style="letter-spacing:-0.5px">PU_7</span></div>
<div style="position:absolute;left:129px;top:1014px;width:422px;height:1px;background:#dedfe2;"></div>
<svg style="position:absolute;left:140.6px;top:991.3209999999999px;width:8px;height:13px;color:#9a9a9a;"><use href="#chevr"/></svg>
<svg style="position:absolute;left:165.1px;top:989.3209999999999px;width:20px;height:17px;color:#9a9a9a;"><use href="#fold2"/></svg>
<div style="position:absolute;left:194.6px;top:982.8px;line-height:30.0px;font-size:20px;color:#1e1e1e;white-space:nowrap;font-family:'Liberation Sans', sans-serif;"><span style="letter-spacing:-0.5px">ST</span></div>
<svg style="position:absolute;left:517.5px;top:984.3209999999999px;width:28px;height:28px;color:#222;"><use href="#online"/></svg>
<div style="position:absolute;left:113px;top:1051px;width:438px;height:1px;background:#dedfe2;"></div>
<svg style="position:absolute;left:124.5px;top:1031.238px;width:13px;height:8px;color:#2474f2;"><use href="#chevd"/></svg>
<svg style="position:absolute;left:148.5px;top:1026.738px;width:20px;height:17px;color:#2474f2;"><use href="#fold_open"/></svg>
<div style="position:absolute;left:178.0px;top:1020.2px;line-height:30.0px;font-size:20px;color:#2474f2;white-space:nowrap;font-family:'Liberation Sans', sans-serif;">任务</div>
<svg style="position:absolute;left:517.5px;top:1021.738px;width:28px;height:28px;color:#222;"><use href="#online"/></svg>
<div style="position:absolute;left:153px;top:1089px;width:398px;height:1px;background:#dedfe2;"></div>
<svg style="position:absolute;left:165.6px;top:1062.655px;width:21px;height:20px;color:#222;"><use href="#cyc"/></svg>
<div style="position:absolute;left:194.6px;top:1057.7px;line-height:30.0px;font-size:20px;color:#1e1e1e;white-space:nowrap;font-family:'Liberation Sans', sans-serif;"><span style="letter-spacing:-0.5px">Cycle_1&lt;10&gt;</span></div>
<div style="position:absolute;left:153px;top:1126px;width:398px;height:1px;background:#dedfe2;"></div>
<svg style="position:absolute;left:165.6px;top:1100.0720000000001px;width:21px;height:20px;color:#222;"><use href="#cyc"/></svg>
<div style="position:absolute;left:194.6px;top:1095.1px;line-height:30.0px;font-size:20px;color:#1e1e1e;white-space:nowrap;font-family:'Liberation Sans', sans-serif;"><span style="letter-spacing:-0.5px">Cycle_2&lt;11&gt;</span></div>
<div style="position:absolute;left:153px;top:1164px;width:398px;height:1px;background:#dedfe2;"></div>
<svg style="position:absolute;left:165.6px;top:1137.489px;width:21px;height:20px;color:#222;"><use href="#cyc"/></svg>
<div style="position:absolute;left:194.6px;top:1132.5px;line-height:30.0px;font-size:20px;color:#1e1e1e;white-space:nowrap;font-family:'Liberation Sans', sans-serif;"><span style="letter-spacing:-0.5px">Cycle_3&lt;12&gt;</span></div>
<div style="position:absolute;left:153px;top:1202px;width:398px;height:1px;background:#dedfe2;"></div>
<svg style="position:absolute;left:165.6px;top:1175.906px;width:21px;height:20px;color:#222;"><use href="#cyc2"/></svg>
<div style="position:absolute;left:194.6px;top:1170.9px;line-height:30.0px;font-size:20px;color:#1e1e1e;white-space:nowrap;font-family:'Liberation Sans', sans-serif;"><span style="letter-spacing:-0.5px">MainTask&lt;30&gt;</span></div>
<div style="position:absolute;left:136px;top:1240px;width:415px;height:1px;background:#dedfe2;"></div>
<svg style="position:absolute;left:148.5px;top:1214.823px;width:20px;height:17px;color:#222;"><use href="#fold_open"/></svg>
<div style="position:absolute;left:178.0px;top:1208.3px;line-height:30.0px;font-size:20px;color:#1e1e1e;white-space:nowrap;font-family:'Liberation Sans', sans-serif;"><span style="letter-spacing:-0.5px">IO</span>映射表</div>
<div style="position:absolute;left:136px;top:1277px;width:415px;height:1px;background:#dedfe2;"></div>
<svg style="position:absolute;left:148.5px;top:1252.24px;width:20px;height:17px;color:#222;"><use href="#fold_open"/></svg>
<div style="position:absolute;left:178.0px;top:1245.7px;line-height:30.0px;font-size:20px;color:#1e1e1e;white-space:nowrap;font-family:'Liberation Sans', sans-serif;">用户数据类型</div>
<div style="position:absolute;left:113px;top:1314px;width:438px;height:1px;background:#dedfe2;"></div>
<svg style="position:absolute;left:124.5px;top:1294.1570000000002px;width:13px;height:8px;color:#2474f2;"><use href="#chevd"/></svg>
<svg style="position:absolute;left:148.5px;top:1289.6570000000002px;width:20px;height:17px;color:#2474f2;"><use href="#fold_open"/></svg>
<div style="position:absolute;left:178.0px;top:1283.2px;line-height:30.0px;font-size:20px;color:#2474f2;white-space:nowrap;font-family:'Liberation Sans', sans-serif;">引用库</div>
<svg style="position:absolute;left:517.5px;top:1284.6570000000002px;width:28px;height:28px;color:#222;"><use href="#online"/></svg>
<div style="position:absolute;left:129px;top:1352px;width:422px;height:1px;background:#dedfe2;"></div>
<svg style="position:absolute;left:140.6px;top:1329.074px;width:8px;height:13px;color:#9a9a9a;"><use href="#chevr"/></svg>
<svg style="position:absolute;left:165.1px;top:1327.074px;width:20px;height:17px;color:#9a9a9a;"><use href="#fold_open"/></svg>
<div style="position:absolute;left:194.6px;top:1320.6px;line-height:30.0px;font-size:20px;color:#1e1e1e;white-space:nowrap;font-family:'Liberation Sans', sans-serif;">系统库</div>
<svg style="position:absolute;left:517.5px;top:1322.074px;width:28px;height:28px;color:#222;"><use href="#online"/></svg>
<div style="position:absolute;left:136px;top:1389px;width:415px;height:1px;background:#dedfe2;"></div>
<svg style="position:absolute;left:148.5px;top:1364.491px;width:20px;height:17px;color:#222;"><use href="#fold_open"/></svg>
<div style="position:absolute;left:178.0px;top:1358.0px;line-height:30.0px;font-size:20px;color:#1e1e1e;white-space:nowrap;font-family:'Liberation Sans', sans-serif;">工艺控制</div>
<div style="position:absolute;left:64px;top:1427px;width:490px;height:1px;background:#dedfe2;"></div>
<svg style="position:absolute;left:107.89999999999998px;top:1406.4080000000001px;width:13px;height:8px;color:#2474f2;"><use href="#chevd"/></svg>
<svg style="position:absolute;left:131.89999999999998px;top:1401.9080000000001px;width:20px;height:17px;color:#2474f2;"><use href="#fold_open"/></svg>
<div style="position:absolute;left:161.39999999999998px;top:1395.4px;line-height:30.0px;font-size:20px;color:#2474f2;white-space:nowrap;font-family:'Liberation Sans', sans-serif;">调试</div>
<svg style="position:absolute;left:148.5px;top:1437.825px;width:21px;height:20px;color:#222;"><use href="#diag"/></svg>
<div style="position:absolute;left:178.0px;top:1432.8px;line-height:30.0px;font-size:20px;color:#1e1e1e;white-space:nowrap;font-family:'Liberation Sans', sans-serif;">在线诊断</div>
<svg style="position:absolute;left:148.5px;top:1475.2420000000002px;width:21px;height:20px;color:#222;"><use href="#mon"/></svg>
<div style="position:absolute;left:178.0px;top:1470.2px;line-height:30.0px;font-size:20px;color:#1e1e1e;white-space:nowrap;font-family:'Liberation Sans', sans-serif;">任务监视</div>
<div style="position:absolute;left:136px;top:1538px;width:415px;height:1px;background:#dedfe2;"></div>
<svg style="position:absolute;left:148.5px;top:1513.159px;width:20px;height:17px;color:#222;"><use href="#fold_open"/></svg>
<div style="position:absolute;left:178.0px;top:1506.7px;line-height:30.0px;font-size:20px;color:#1e1e1e;white-space:nowrap;font-family:'Liberation Sans', sans-serif;">监控表</div>
<div style="position:absolute;left:64px;top:1575px;width:490px;height:1px;background:#dedfe2;"></div>
<svg style="position:absolute;left:107.89999999999998px;top:1555.076px;width:13px;height:8px;color:#2474f2;"><use href="#chevd"/></svg>
<svg style="position:absolute;left:131.89999999999998px;top:1550.576px;width:20px;height:17px;color:#2474f2;"><use href="#fold_open"/></svg>
<div style="position:absolute;left:161.39999999999998px;top:1544.1px;line-height:30.0px;font-size:20px;color:#2474f2;white-space:nowrap;font-family:'Liberation Sans', sans-serif;">硬件</div>
<svg style="position:absolute;left:491.5px;top:1549.076px;width:21px;height:21px;color:#222;"><use href="#chk"/></svg>
<svg style="position:absolute;left:517.5px;top:1545.576px;width:28px;height:28px;color:#222;"><use href="#online"/></svg>
<svg style="position:absolute;left:148.5px;top:1590.9930000000002px;width:21px;height:11px;color:#333;"><use href="#dev"/></svg>
<div style="position:absolute;left:178.0px;top:1581.5px;line-height:30.0px;font-size:20px;color:#1e1e1e;white-space:nowrap;font-family:'Liberation Sans', sans-serif;">设备组态</div>
<div style="position:absolute;left:113px;top:1650px;width:438px;height:1px;background:#dedfe2;"></div>
<svg style="position:absolute;left:124.5px;top:1629.91px;width:13px;height:8px;color:#2474f2;"><use href="#chevd"/></svg>
<svg style="position:absolute;left:148.5px;top:1625.41px;width:20px;height:17px;color:#2474f2;"><use href="#fold_open"/></svg>
<div style="position:absolute;left:178.0px;top:1618.9px;line-height:30.0px;font-size:20px;color:#2474f2;white-space:nowrap;font-family:'Liberation Sans', sans-serif;">本地配置</div>
<svg style="position:absolute;left:491.5px;top:1623.91px;width:21px;height:21px;color:#222;"><use href="#chk"/></svg>
<svg style="position:absolute;left:517.5px;top:1620.41px;width:28px;height:28px;color:#222;"><use href="#online"/></svg>
<div style="position:absolute;left:153px;top:1688px;width:398px;height:1px;background:#dedfe2;"></div>
<svg style="position:absolute;left:166.6px;top:1660.827px;width:18px;height:21px;color:#222;"><use href="#cpu"/></svg>
<div style="position:absolute;left:194.6px;top:1656.3px;line-height:30.0px;font-size:20px;color:#1e1e1e;white-space:nowrap;font-family:'Liberation Sans', sans-serif;"><span style="letter-spacing:-0.5px">0 CPU_1[T324-XP-CD-10]</span></div>
<svg style="position:absolute;left:491.5px;top:1661.327px;width:21px;height:21px;color:#222;"><use href="#chk"/></svg>
<div style="position:absolute;left:136px;top:1725px;width:415px;height:1px;background:#dedfe2;"></div>
<svg style="position:absolute;left:148.5px;top:1700.2440000000001px;width:20px;height:17px;color:#222;"><use href="#fold_open"/></svg>
<div style="position:absolute;left:178.0px;top:1693.7px;line-height:30.0px;font-size:20px;color:#1e1e1e;white-space:nowrap;font-family:'Liberation Sans', sans-serif;">远程配置</div>
<div style="position:absolute;left:560px;top:80px;width:3.5px;height:1825px;background:#b0cdfb;"></div>
<div style="position:absolute;left:563px;top:80px;width:1550px;height:37px;background:#dce8fb;"></div>
<svg style="position:absolute;left:584px;top:89px;width:21px;height:20px;color:#8a8a8a;"><use href="#cyc"/></svg>
<div style="position:absolute;left:620.5px;top:84.6px;line-height:30.75px;font-size:20.5px;color:#8a8a8a;white-space:nowrap;font-family:'Liberation Sans', sans-serif;"><span style="letter-spacing:-0.5px">Cycle_3</span></div>
<div style="position:absolute;left:562px;top:116.5px;width:191.60000000000002px;height:3px;background:#efd6c4;"></div>
<svg style="position:absolute;left:773.1px;top:93px;width:20px;height:14px;color:#1e1e1e;"><use href="#code"/></svg>
<div style="position:absolute;left:809.6px;top:84.6px;line-height:30.75px;font-size:20.5px;color:#1e1e1e;white-space:nowrap;font-family:'Liberation Sans', sans-serif;"><span style="letter-spacing:-0.5px">PU_1</span></div>
<div style="position:absolute;left:753.6px;top:116.5px;width:167.0px;height:3px;background:#a6e3c2;"></div>
<svg style="position:absolute;left:940.1px;top:93px;width:20px;height:14px;color:#1e1e1e;"><use href="#code"/></svg>
<div style="position:absolute;left:976.6px;top:84.6px;line-height:30.75px;font-size:20.5px;color:#1e1e1e;white-space:nowrap;font-family:'Liberation Sans', sans-serif;"><span style="letter-spacing:-0.5px">PU_2</span></div>
<div style="position:absolute;left:920.6px;top:116.5px;width:166.9999999999999px;height:3px;background:#a6e3c2;"></div>
<svg style="position:absolute;left:1107.1px;top:93px;width:20px;height:14px;color:#8a8a8a;"><use href="#code"/></svg>
<div style="position:absolute;left:1143.6px;top:84.6px;line-height:30.75px;font-size:20.5px;color:#8a8a8a;white-space:nowrap;font-family:'Liberation Sans', sans-serif;"><span style="letter-spacing:-0.5px">PU_4</span></div>
<div style="position:absolute;left:1087.6px;top:116.5px;width:167.80000000000018px;height:3px;background:#efd6c4;"></div>
<svg style="position:absolute;left:1274.9px;top:93px;width:20px;height:14px;color:#8a8a8a;"><use href="#code"/></svg>
<div style="position:absolute;left:1311.4px;top:84.6px;line-height:30.75px;font-size:20.5px;color:#8a8a8a;white-space:nowrap;font-family:'Liberation Sans', sans-serif;"><span style="letter-spacing:-0.5px">PU_5</span></div>
<div style="position:absolute;left:1255.4px;top:116.5px;width:167.0999999999999px;height:3px;background:#efd6c4;"></div>
<svg style="position:absolute;left:1442.0px;top:93px;width:20px;height:14px;color:#8a8a8a;"><use href="#code"/></svg>
<div style="position:absolute;left:1478.5px;top:84.6px;line-height:30.75px;font-size:20.5px;color:#8a8a8a;white-space:nowrap;font-family:'Liberation Sans', sans-serif;"><span style="letter-spacing:-0.5px">PU_7</span></div>
<div style="position:absolute;left:1422.5px;top:116.5px;width:167.0999999999999px;height:3px;background:#efd6c4;"></div>
<svg style="position:absolute;left:1609.1px;top:93px;width:20px;height:14px;color:#8a8a8a;"><use href="#code"/></svg>
<div style="position:absolute;left:1645.6px;top:84.6px;line-height:30.75px;font-size:20.5px;color:#8a8a8a;white-space:nowrap;font-family:'Liberation Sans', sans-serif;"><span style="letter-spacing:-0.5px">PU_14</span></div>
<div style="position:absolute;left:1589.6px;top:116.5px;width:177.70000000000005px;height:3px;background:#efd6c4;"></div>
<svg style="position:absolute;left:1786.8px;top:93px;width:20px;height:14px;color:#8a8a8a;"><use href="#code"/></svg>
<div style="position:absolute;left:1823.3px;top:84.6px;line-height:30.75px;font-size:20.5px;color:#8a8a8a;white-space:nowrap;font-family:'Liberation Sans', sans-serif;"><span style="letter-spacing:-0.5px">PU_6</span></div>
<div style="position:absolute;left:1767.3px;top:116.5px;width:167.29999999999995px;height:3px;background:#efd6c4;"></div>
<svg style="position:absolute;left:1954.1px;top:93px;width:20px;height:14px;color:#1e1e1e;"><use href="#code"/></svg>
<div style="position:absolute;left:1990.6px;top:84.6px;line-height:30.75px;font-size:20.5px;color:#1e1e1e;white-space:nowrap;font-family:'Liberation Sans', sans-serif;"><span style="letter-spacing:-0.5px">PU_3</span></div>
<div style="position:absolute;left:1934.6px;top:116.5px;width:166.4000000000001px;height:3px;background:#3acf9c;"></div>
<svg style="position:absolute;left:2077px;top:93px;width:10px;height:9px" viewBox="0 0 10 9"><path d="M0.6 0.5 L9.4 8.5 M9.4 0.5 L0.6 8.5" stroke="#222" stroke-width="1.2"/></svg>
<div style="position:absolute;left:563px;top:119.5px;width:1550px;height:43.5px;background:#e9f0fc;"></div>
<div style="position:absolute;left:563px;top:163px;width:1550px;height:1px;background:#a8c6f3;"></div>
<div style="position:absolute;left:563px;top:164px;width:1550px;height:14.5px;background:#f6f9fe;"></div>
<div style="position:absolute;left:563px;top:178.5px;width:1550px;height:1px;background:#a8c6f3;"></div>
<div style="position:absolute;left:563px;top:179.5px;width:1550px;height:40.5px;background:#e9f0fc;"></div>
<div style="position:absolute;left:563px;top:220px;width:1528px;height:1px;background:#d0d0d0;"></div>

<svg style="position:absolute;left:587px;top:129px;width:27px;height:27px" viewBox="0 0 27 27"><path d="M13.5 1 V26 M1 13.5 H26" stroke="#c6c8cc" stroke-width="3.6"/></svg>
<svg style="position:absolute;left:646px;top:129px;width:23px;height:26px" viewBox="0 0 23 26"><path d="M11.5 3 V26 M1.5 12 L11.5 2 L21.5 12" fill="none" stroke="#c6c8cc" stroke-width="3.4"/></svg>
<svg style="position:absolute;left:703px;top:129px;width:23px;height:26px" viewBox="0 0 23 26"><path d="M11.5 0 V23 M1.5 14 L11.5 24 L21.5 14" fill="none" stroke="#c6c8cc" stroke-width="3.4"/></svg>
<svg style="position:absolute;left:757px;top:129px;width:27px;height:27px" viewBox="0 0 27 27"><path d="M12 2.5 H4 Q1.5 2.5 1.5 5 V23 Q1.5 25.5 4 25.5 H22 Q24.5 25.5 24.5 23 V15" fill="none" stroke="#0a5ed7" stroke-width="2.4"/><path d="M25 3 Q15 4 12 13 L9.5 10 L9 20 L18 17.5 L14.8 15 Q17 8 25 6.5 Z" fill="#0a5ed7"/></svg>
<svg style="position:absolute;left:814px;top:129px;width:27px;height:27px" viewBox="0 0 27 27"><path d="M12 2.5 H4 Q1.5 2.5 1.5 5 V23 Q1.5 25.5 4 25.5 H22 Q24.5 25.5 24.5 23 V15" fill="none" stroke="#0a5ed7" stroke-width="2.4"/><path d="M9 21 Q10 10 19 7 L16.5 4 L26 2.5 L24.5 12 L21.5 9.5 Q14 12 9 21 Z" fill="#0a5ed7"/></svg>
<svg style="position:absolute;left:870px;top:129px;width:27px;height:27px" viewBox="0 0 27 27"><path d="M20 5 A11 11 0 1 0 12 25" fill="none" stroke="#cfd2d6" stroke-width="2"/><path d="M17 1 L22 4.5 L17.5 8" fill="none" stroke="#cfd2d6" stroke-width="2"/><path d="M13 8 V17" stroke="#cfd2d6" stroke-width="1.5"/><path d="M15 12 L27 19 L15 26 Z" fill="#cfd2d6"/></svg>
<div style="position:absolute;left:920px;top:132px;width:1px;height:20px;background:#c8cfd9"></div>
<svg style="position:absolute;left:944px;top:129px;width:28px;height:27px" viewBox="0 0 28 27"><rect x="0" y="0" width="27" height="6" fill="#1f6ae6"/><path d="M2 10 V21 M2 14.5 H11 M8 13.5 L10 11 M1.5 26 H11" fill="none" stroke="#1f6ae6" stroke-width="1.6"/><path d="M20 12 V26 M13 19 H27" stroke="#1f6ae6" stroke-width="3.4"/></svg>
<svg style="position:absolute;left:1001px;top:129px;width:28px;height:27px" viewBox="0 0 28 27"><rect x="0" y="0" width="27" height="6" fill="#1f6ae6"/><path d="M2 10 V21 M2 14.5 H11 M8 13.5 L10 11 M1.5 26 H11" fill="none" stroke="#1f6ae6" stroke-width="1.6"/><path d="M13 19 H27" stroke="#1f6ae6" stroke-width="3.4"/></svg>
<svg style="position:absolute;left:1058px;top:129px;width:27px;height:27px" viewBox="0 0 27 27"><rect x="0" y="0" width="26" height="6" fill="#1f6ae6"/><rect x="0" y="10.5" width="26" height="6" fill="#1f6ae6"/><rect x="0" y="21" width="26" height="6" fill="#1f6ae6"/></svg>
<svg style="position:absolute;left:1115px;top:130px;width:26px;height:25px" viewBox="0 0 26 25"><path d="M3 1 H23 Q25 1 25 3 V15 Q25 17 23 17 H16 L13 20 L10 17 H3 Q1 17 1 15 V3 Q1 1 3 1 Z" fill="none" stroke="#0a5ed7" stroke-width="1.8"/><circle cx="7.5" cy="9" r="1.5" fill="#0a5ed7"/><circle cx="13" cy="9" r="1.5" fill="#0a5ed7"/><circle cx="18.5" cy="9" r="1.5" fill="#0a5ed7"/><path d="M2 23.5 H24" stroke="#0a5ed7" stroke-width="2"/></svg>
<svg style="position:absolute;left:1172px;top:131px;width:25px;height:23px" viewBox="0 0 25 23"><path d="M3 1 H22 Q24 1 24 3 V16 Q24 18 22 18 H15 L12 22 L9 18 H3 Q1 18 1 16 V3 Q1 1 3 1 Z" fill="none" stroke="#0a5ed7" stroke-width="1.9"/><path d="M6 15 L10.5 4" stroke="#0a5ed7" stroke-width="1.8"/><path d="M16 3.5 V10 M13 5.3 L19 8.3 M19 5.3 L13 8.3" stroke="#0a5ed7" stroke-width="1.6"/></svg>
<svg style="position:absolute;left:1228px;top:131px;width:26px;height:24px" viewBox="0 0 26 24"><path d="M14 18 H10 L8 21 L6 18 H3 Q1 18 1 16 V3 Q1 1 3 1 H22 Q24 1 24 3 V11" fill="none" stroke="#cfd2d6" stroke-width="1.8"/><path d="M6 15 L10.5 4 M16 3.5 V10 M13 5.3 L19 8.3 M19 5.3 L13 8.3 M16 14 L25 23 M25 14 L16 23" stroke="#cfd2d6" stroke-width="1.7"/></svg>
<div style="position:absolute;left:1277px;top:122px;width:38.5px;height:39px;background:#c5d7f1;border-radius:5px;box-shadow:inset 0 0 0 1px #b9cdec"></div>
<svg style="position:absolute;left:1283px;top:129px;width:28px;height:27px" viewBox="0 0 28 27"><path d="M14 1.8 L17.6 9.4 L25.8 10.3 L19.7 15.9 L21.4 24 L14 19.9 L6.6 24 L8.3 15.9 L2.2 10.3 L10.4 9.4 Z" fill="none" stroke="#2474f2" stroke-width="1.9" stroke-linejoin="round"/></svg>
<div style="position:absolute;left:1334px;top:132px;width:1px;height:20px;background:#c8cfd9"></div>
<svg style="position:absolute;left:1358px;top:129px;width:28px;height:27px" viewBox="0 0 28 27" fill="none" stroke="#cfd2d6" stroke-width="1.6"><path d="M14 0 V14 M9 9 L14 14 L19 9 M8 13 H1 V26 H27 V13 H20"/><path d="M5 18 V23 M8 18 V23" /><circle cx="16" cy="21" r="2"/><circle cx="21.5" cy="21" r="2"/></svg>
<div style="position:absolute;left:1408px;top:122px;width:38px;height:39px;background:#c5d7f1;border-radius:5px;box-shadow:inset 0 0 0 1px #b9cdec"></div>
<svg style="position:absolute;left:1414px;top:132px;width:27px;height:22px" viewBox="0 0 27 22"><rect x="4" y="1" width="6" height="5" rx="1" fill="#f59a0e"/><rect x="17" y="1" width="6" height="5" rx="1" fill="#f59a0e"/><rect x="8" y="5" width="11" height="6" fill="#f59a0e"/><circle cx="7" cy="14" r="7" fill="#f59a0e"/><circle cx="20" cy="14" r="7" fill="#f59a0e"/><path d="M4 12 Q5 9.5 8 9.5 M17 12 Q18 9.5 21 9.5" stroke="#fff" stroke-width="1.3" fill="none"/></svg>
<div style="position:absolute;left:1465px;top:132px;width:1px;height:20px;background:#c8cfd9"></div>
<svg style="position:absolute;left:1490px;top:130px;width:25px;height:24px" viewBox="0 0 25 24"><rect x="2" y="1.5" width="21" height="21" rx="3.5" fill="none" stroke="#0a5ed7" stroke-width="2.4"/><path d="M0 12 H25" stroke="#0a5ed7" stroke-width="2.4"/></svg>
<svg style="position:absolute;left:1546px;top:130px;width:25px;height:24px" viewBox="0 0 25 24"><rect x="3" y="1.5" width="19" height="20" rx="3" fill="none" stroke="#0a5ed7" stroke-width="2.4"/><path d="M0 22.5 H25" stroke="#2154b0" stroke-width="2.2"/></svg>
<svg style="position:absolute;left:1603px;top:130px;width:25px;height:24px" viewBox="0 0 25 24"><rect x="3" y="2.5" width="19" height="20" rx="3" fill="none" stroke="#0a5ed7" stroke-width="2.4"/><path d="M0 1.5 H25" stroke="#2154b0" stroke-width="2.2"/></svg>
<svg style="position:absolute;left:2064px;top:129px;width:24px;height:24px" viewBox="0 0 24 24"><circle cx="10" cy="10" r="8" fill="none" stroke="#0a5ed7" stroke-width="2.3"/><path d="M16 16 L22.5 22.5" stroke="#0a5ed7" stroke-width="2.8" stroke-linecap="round"/><path d="M5.5 9 Q6 5.8 9.5 5.3" fill="none" stroke="#0a5ed7" stroke-width="1.3"/></svg>


<svg style="position:absolute;left:574px;top:190px;width:14px;height:18px" viewBox="0 0 14 18"><path d="M2 0 V18 M13 0 L3.5 9 L13 18" fill="none" stroke="#6e6e6e" stroke-width="2.7"/></svg>
<svg style="position:absolute;left:615px;top:191px;width:11px;height:17px" viewBox="0 0 11 17"><path d="M10 1 L2 8.5 L10 16" fill="none" stroke="#666" stroke-width="1.8"/></svg>
<svg style="position:absolute;left:647px;top:187px;width:28px;height:24px" viewBox="0 0 28 24"><rect x="4" y="1" width="20" height="22" fill="none" stroke="#1e1e1e" stroke-width="1.8"/><path d="M0 7 H4 M0 17 H4 M24 7 H28 M10 5 H18 M14 5 V19 M10 19 H18" stroke="#1e1e1e" stroke-width="1.6"/></svg>
<svg style="position:absolute;left:694px;top:186px;width:19px;height:23px" viewBox="0 0 19 23"><path d="M2 0 V13 H17 M11 7 L17 13 L11 19" fill="none" stroke="#1e1e1e" stroke-width="2.2"/></svg>
<svg style="position:absolute;left:733px;top:188px;width:25px;height:22px" viewBox="0 0 25 22"><path d="M1 19 H18.2 V5 M11.5 11.5 L18.2 4.8 L24.5 11.5" fill="none" stroke="#1e1e1e" stroke-width="2.2"/></svg>
<svg style="position:absolute;left:776px;top:194px;width:26px;height:16px" viewBox="0 0 26 16"><path d="M1 2 H4.5 V12 H10.5 M10.5 5.5 V15 M16 5.5 V15 M16 12 H21.8 V2 H25" fill="none" stroke="#1e1e1e" stroke-width="2"/></svg>
<svg style="position:absolute;left:820px;top:188px;width:28px;height:23px" viewBox="0 0 28 23"><path d="M0 10.6 H10 M10 0.8 V22.8 M16.5 0.8 V22.8 M16.5 10.6 H27" fill="none" stroke="#1e1e1e" stroke-width="2.3"/></svg>
<svg style="position:absolute;left:863px;top:188px;width:28px;height:23px" viewBox="0 0 28 23"><path d="M0 11.5 H8 M8 0 V23 M20 0 V23 M20 11.5 H28 M10 20 L18 3" fill="none" stroke="#1e1e1e" stroke-width="2.3"/></svg>
<svg style="position:absolute;left:907px;top:188px;width:27px;height:26px" viewBox="0 0 27 26"><text x="13.8" y="9.8" text-anchor="middle" font-family="Liberation Sans" font-weight="bold" font-size="10" fill="#1e1e1e">NOT</text><path d="M0 17.5 H5.5 M5.5 12.5 V24.5 M21.3 12.5 V24.5 M21.3 17.5 H26.6" fill="none" stroke="#1e1e1e" stroke-width="2.2"/></svg>
<svg style="position:absolute;left:950px;top:187px;width:27px;height:25px" viewBox="0 0 27 25"><path d="M0 12.5 H6 M21 12.5 H27" stroke="#1e1e1e" stroke-width="2.2"/><path d="M9.5 1 Q4.5 12.5 9.5 24 M17.5 1 Q22.5 12.5 17.5 24" fill="none" stroke="#1e1e1e" stroke-width="2.4"/></svg>
<svg style="position:absolute;left:993px;top:187px;width:27px;height:25px" viewBox="0 0 27 25"><path d="M0 12.5 H6 M21 12.5 H27 M11 21 L16 4" stroke="#1e1e1e" stroke-width="2.2"/><path d="M9.5 1 Q4.5 12.5 9.5 24 M17.5 1 Q22.5 12.5 17.5 24" fill="none" stroke="#1e1e1e" stroke-width="2.4"/></svg>
<svg style="position:absolute;left:2013px;top:191px;width:12px;height:17px" viewBox="0 0 12 17"><path d="M1 1 L10 8.5 L1 16" fill="none" stroke="#666" stroke-width="1.8"/></svg>
<svg style="position:absolute;left:2049px;top:190px;width:14px;height:18px" viewBox="0 0 14 18"><path d="M1 0 L11 9 L1 18 M12.5 0 V18" fill="none" stroke="#555" stroke-width="2.2"/></svg>
<svg style="position:absolute;left:2085px;top:187px;width:21px;height:24px" viewBox="0 0 21 24"><path d="M20 7 H3 M8 1 L2 7 L8 13 M1 17 H18 M13 11 L19 17 L13 23" fill="none" stroke="#1e1e1e" stroke-width="2.2"/></svg>

<div style="position:absolute;left:563px;top:221px;width:1550px;height:985px;background:#ffffff;"></div>
<div style="position:absolute;left:2091px;top:221px;width:1px;height:985px;background:#d4d4d4;"></div>
<div style="position:absolute;left:565px;top:221px;width:36px;height:433px;background:#e6e6e6;"></div>
<div style="position:absolute;left:601px;top:221px;width:2px;height:433px;background:#e8effb;"></div>
<div style="position:absolute;left:602px;top:221px;width:1489px;height:38.5px;background:#f6f6f6;"></div>
<div style="position:absolute;left:646px;top:224px;width:298px;height:31px;background:#fafafa;border-radius:5px;box-shadow:0 0 0 1px #efefef;"></div>
<svg style="position:absolute;left:614px;top:235px;width:13px;height:8px;color:#333;"><use href="#chevd"/></svg>
<div style="position:absolute;left:649px;top:222.0px;line-height:30.0px;font-size:20px;color:#2474f2;white-space:nowrap;font-family:'Liberation Sans', sans-serif;font-weight:bold;">程序段<span style="letter-spacing:0.8px">&nbsp;&nbsp;1</span></div>
<div style="position:absolute;left:563px;top:653px;width:1528px;height:1.5px;background:#c8c8c8;"></div>
<div style="position:absolute;left:575px;top:423.4px;line-height:29.25px;font-size:19.5px;color:#111;white-space:nowrap;font-family:'Liberation Mono', monospace;font-weight:bold;">1</div>
<div style="position:absolute;left:618px;top:276px;width:886px;height:361px;border:1.2px solid #e3ecfb;box-sizing:border-box;"></div>
<div style="position:absolute;left:634px;top:292px;width:3px;height:330px;background:#3fcf95;"></div>
<div style="position:absolute;left:636px;top:387px;width:305px;height:2.5px;background:#3fcf95;"></div>
<div style="position:absolute;left:941px;top:341px;width:231px;height:280px;background:#f4f7fe;border:2px solid #3fcf95;box-sizing:border-box;"></div>
<div style="position:absolute;left:943px;top:343px;width:227px;height:24px;background:#dce8fa;"></div>
<div style="position:absolute;left:856.5px;width:400px;text-align:center;top:301.4px;line-height:30px;font-size:19.5px;color:#111;white-space:nowrap;font-family:'Liberation Mono', monospace;-webkit-text-stroke:0.3px #111;">TDISCON_1</div>
<div style="position:absolute;left:856.5px;width:400px;text-align:center;top:340.5px;line-height:30px;font-size:19.5px;color:#111;white-space:nowrap;font-family:'Liberation Mono', monospace;-webkit-text-stroke:0.3px #111;">TDISCON</div>
<div style="position:absolute;left:946px;top:372.5px;line-height:30px;font-size:19.5px;color:#111;white-space:nowrap;font-family:'Liberation Mono', monospace;-webkit-text-stroke:0.3px #111;">EN</div>
<div style="position:absolute;right:1371px;top:372.5px;line-height:30px;font-size:19.5px;color:#111;white-space:nowrap;font-family:'Liberation Mono', monospace;-webkit-text-stroke:0.3px #111;">ENO</div>
<div style="position:absolute;left:1014px;top:387px;width:84px;height:1.5px;background:#3fcf95;"></div>
<div style="position:absolute;left:1172px;top:387px;width:315px;height:2.5px;background:#3fcf95;"></div>
<div style="position:absolute;left:1485px;top:378px;width:2.5px;height:19px;background:#3fcf95;"></div>
<div style="position:absolute;left:800px;top:401.5px;width:92.5px;height:27px;background:#e4f4ec;border-radius:4px;"></div>
<div style="position:absolute;right:1656px;top:399px;line-height:30px;font-size:20px;color:#2fb36a;white-space:nowrap;letter-spacing:-2px">TRUE</div>
<div style="position:absolute;right:1646px;top:426.7px;line-height:30px;font-size:19.5px;color:#111;white-space:nowrap;font-family:'Liberation Mono', monospace;-webkit-text-stroke:0.3px #111;">Close</div>
<div style="position:absolute;left:898px;top:438.5px;width:43px;height:2.5px;background:#3fcf95;"></div>
<div style="position:absolute;left:946px;top:426.7px;line-height:30px;font-size:19.5px;color:#111;white-space:nowrap;font-family:'Liberation Mono', monospace;-webkit-text-stroke:0.3px #111;">REQ</div>
<div style="position:absolute;right:1646px;top:454.2px;line-height:30px;font-size:19.5px;color:#111;white-space:nowrap;font-family:'Liberation Mono', monospace;-webkit-text-stroke:0.3px #111;">TCP_CONNECTCONFIG</div>
<div style="position:absolute;right:1646px;top:477.7px;line-height:30px;font-size:19.5px;color:#111;white-space:nowrap;font-family:'Liberation Mono', monospace;-webkit-text-stroke:0.3px #111;">_1</div>
<svg style="position:absolute;left:897px;top:460px;width:44px;height:14px" viewBox="0 0 44 14"><path d="M1 7 H43 M7 1 L1 7 L7 13 M37 1 L43 7 L37 13" fill="none" stroke="#8ab0f2" stroke-width="1.6"/></svg>
<div style="position:absolute;left:946px;top:454.2px;line-height:30px;font-size:19.5px;color:#111;white-space:nowrap;font-family:'Liberation Mono', monospace;-webkit-text-stroke:0.3px #111;">CONNECT</div>
<div style="position:absolute;right:1371px;top:426.9px;line-height:30px;font-size:19.5px;color:#111;white-space:nowrap;font-family:'Liberation Mono', monospace;-webkit-text-stroke:0.3px #111;">DONE</div>
<div style="position:absolute;left:1172px;top:438px;width:42px;height:2px;background:#8ab0f2;"></div>
<div style="position:absolute;left:1220px;top:426.9px;line-height:30px;font-size:19.5px;color:#111;white-space:nowrap;font-family:'Liberation Mono', monospace;-webkit-text-stroke:0.3px #111;">OUT</div>
<div style="position:absolute;left:1219.5px;top:401.7px;width:92.5px;height:26px;background:#eaf0fb;border-radius:4px;"></div>
<div style="position:absolute;left:1233px;top:400.2px;line-height:30px;font-size:19.5px;color:#222;white-space:nowrap;font-family:'Liberation Mono', monospace;-webkit-text-stroke:0.3px #222;">FALSE</div>
<div style="position:absolute;right:1371px;top:480.2px;line-height:30px;font-size:19.5px;color:#111;white-space:nowrap;font-family:'Liberation Mono', monospace;-webkit-text-stroke:0.3px #111;">BUSY</div>
<div style="position:absolute;left:1172px;top:491.3px;width:42px;height:2px;background:#8ab0f2;"></div>
<div style="position:absolute;left:1220px;top:480.2px;line-height:30px;font-size:19.5px;color:#111;white-space:nowrap;font-family:'Liberation Mono', monospace;-webkit-text-stroke:0.3px #111;">OUT2</div>
<div style="position:absolute;left:1219.5px;top:455.0px;width:92.5px;height:26px;background:#eaf0fb;border-radius:4px;"></div>
<div style="position:absolute;left:1233px;top:453.5px;line-height:30px;font-size:19.5px;color:#222;white-space:nowrap;font-family:'Liberation Mono', monospace;-webkit-text-stroke:0.3px #222;">FALSE</div>
<div style="position:absolute;right:1371px;top:533.5px;line-height:30px;font-size:19.5px;color:#111;white-space:nowrap;font-family:'Liberation Mono', monospace;-webkit-text-stroke:0.3px #111;">ERROR</div>
<div style="position:absolute;left:1172px;top:544.6px;width:42px;height:2px;background:#8ab0f2;"></div>
<div style="position:absolute;left:1220px;top:533.5px;line-height:30px;font-size:19.5px;color:#111;white-space:nowrap;font-family:'Liberation Mono', monospace;-webkit-text-stroke:0.3px #111;">OUT3</div>
<div style="position:absolute;left:1219.5px;top:508.3px;width:92.5px;height:26px;background:#eaf0fb;border-radius:4px;"></div>
<div style="position:absolute;left:1233px;top:506.80000000000007px;line-height:30px;font-size:19.5px;color:#222;white-space:nowrap;font-family:'Liberation Mono', monospace;-webkit-text-stroke:0.3px #222;">FALSE</div>
<div style="position:absolute;right:1371px;top:586.8px;line-height:30px;font-size:19.5px;color:#111;white-space:nowrap;font-family:'Liberation Mono', monospace;-webkit-text-stroke:0.3px #111;">STATUS</div>
<div style="position:absolute;left:1172px;top:597.9px;width:42px;height:2px;background:#8ab0f2;"></div>
<div style="position:absolute;left:1220px;top:586.8px;line-height:30px;font-size:19.5px;color:#111;white-space:nowrap;font-family:'Liberation Mono', monospace;-webkit-text-stroke:0.3px #111;">OUT4</div>
<div style="position:absolute;left:1219.5px;top:561.6px;width:108.5px;height:26px;background:#eaf0fb;border-radius:4px;"></div>
<div style="position:absolute;left:1233px;top:560.1px;line-height:30px;font-size:19.5px;color:#222;white-space:nowrap;font-family:'Liberation Mono', monospace;-webkit-text-stroke:0.3px #222;">16#7007</div>
<div style="position:absolute;left:563px;top:1206px;width:1550px;height:45px;background:#f8f8f8;"></div>
<svg style="position:absolute;left:583px;top:1223px;width:18px;height:13px" viewBox="0 0 18 13"><path d="M9 0.5 L17.5 12.5 H0.5 Z" fill="#2474f2" stroke="#2474f2" stroke-linejoin="round" stroke-width="1"/></svg>
<div style="position:absolute;left:627px;top:1215.0px;line-height:30.0px;font-size:20px;color:#111;white-space:nowrap;font-family:'Liberation Sans', sans-serif;"><span style="letter-spacing:-1.3px">CYCLE_1</span></div>
<svg style="position:absolute;left:733px;top:1223px;width:9px;height:15px;color:#b0b0b0;"><use href="#chevr"/></svg>
<div style="position:absolute;left:767px;top:1215.0px;line-height:30.0px;font-size:20px;color:#2474f2;white-space:nowrap;font-family:'Liberation Sans', sans-serif;"><span style="letter-spacing:-0.5px">PU_3</span></div>
<svg style="position:absolute;left:1946px;top:1215px;width:26px;height:28px" viewBox="0 0 26 28"><g fill="#2474f2"><path d="M0 7.2 H25.5 V11 H0 Z"/><path d="M13 0.5 L25.5 11 H13 Z"/><path d="M0.5 16.5 H26 V20.3 H0.5 Z"/><path d="M13 27.5 L0.5 16.5 H13 Z"/></g></svg>
<div style="position:absolute;left:1988px;top:1216px;width:1px;height:26px;background:#d6d6d6;"></div>
<div style="position:absolute;left:2006px;top:1212px;width:35px;height:32px;background:#2dd9a0;"></div>
<div style="position:absolute;left:2006px;top:1212px;width:17px;height:32px;background:#3fdca8;"></div>
<div style="position:absolute;left:563px;top:1250.5px;width:1550px;height:3.5px;background:#8ab4f8;"></div>
<div style="position:absolute;left:563px;top:1254px;width:1550px;height:37.5px;background:#dce8fc;"></div>
<div style="position:absolute;left:563px;top:1254px;width:111px;height:37.5px;background:#fdfdfe;"></div>
<div style="position:absolute;left:563px;top:1250px;width:111px;height:4px;background:#1f6ae6;"></div>
<svg style="position:absolute;left:585px;top:1262px;width:21px;height:21px" viewBox="0 0 21 21"><circle cx="10.5" cy="10.5" r="10" fill="#0a5ed7"/><circle cx="11.6" cy="5.3" r="1.7" fill="#fff"/><path d="M9 9 H12.4 L10.8 16.5 H12.6" fill="none" stroke="#fff" stroke-width="2.3" stroke-linejoin="round"/></svg>
<div style="position:absolute;left:615px;top:1260.0px;line-height:30.0px;font-size:20px;color:#2474f2;white-space:nowrap;font-family:'Liberation Sans', sans-serif;">信息</div>
<svg style="position:absolute;left:696px;top:1264px;width:19px;height:17px" viewBox="0 0 19 17"><rect x="1" y="1" width="17" height="15" rx="2" fill="none" stroke="#777" stroke-width="1.5"/><path d="M1 5 H18" stroke="#777" stroke-width="1.3"/><rect x="4" y="8" width="4.5" height="4.5" fill="none" stroke="#777" stroke-width="1.2"/><path d="M11 9 H15 M11 12 H15" stroke="#777" stroke-width="1.3"/></svg>
<div style="position:absolute;left:726px;top:1260.0px;line-height:30.0px;font-size:20px;color:#333;white-space:nowrap;font-family:'Liberation Sans', sans-serif;">属性</div>
<div style="position:absolute;left:563px;top:1291.5px;width:1550px;height:613.5px;background:#f6f9fe;"></div>
<div style="position:absolute;left:660px;top:1315.0px;line-height:30.0px;font-size:20px;color:#666;white-space:nowrap;font-family:'Liberation Sans', sans-serif;">常规</div>
<div style="position:absolute;left:826px;top:1315.0px;line-height:30.0px;font-size:20px;color:#2474f2;white-space:nowrap;font-family:'Liberation Sans', sans-serif;">下载</div>
<div style="position:absolute;left:992px;top:1315.0px;line-height:30.0px;font-size:20px;color:#666;white-space:nowrap;font-family:'Liberation Sans', sans-serif;">编译</div>
<div style="position:absolute;left:766px;top:1344px;width:166px;height:3.5px;background:#1f6ae6;"></div>
<div style="position:absolute;left:599px;top:1347.5px;width:1479px;height:1.5px;background:#9bbcef;"></div>
<div style="position:absolute;left:599px;top:1349px;width:1479px;height:40px;background:#f3f3f2;box-shadow:0 3px 6px rgba(0,0,0,0.10);"></div>
<div style="position:absolute;left:731px;top:1356px;width:1px;height:24px;background:#c8c8c8;"></div>
<div style="position:absolute;left:745px;top:1354.0px;line-height:30.0px;font-size:20px;color:#111;white-space:nowrap;font-family:'Liberation Sans', sans-serif;">路径</div>
<div style="position:absolute;left:1710px;top:1356px;width:1px;height:24px;background:#c8c8c8;"></div>
<div style="position:absolute;left:1725px;top:1354.0px;line-height:30.0px;font-size:20px;color:#111;white-space:nowrap;font-family:'Liberation Sans', sans-serif;">时间</div>
<div style="position:absolute;left:599px;top:1389px;width:1470px;height:498px;overflow:hidden">
<div style="position:absolute;left:0;top:0px;width:1470px;height:40px;background:#ffffff"></div>
<svg style="position:absolute;left:47px;top:10px;width:21px;height:21px" viewBox="0 0 21 21"><circle cx="10.5" cy="10.5" r="10" fill="#0a5ed7"/><circle cx="10.5" cy="5.6" r="1.8" fill="#fff"/><rect x="8.9" y="8.6" width="3.2" height="7.6" fill="#fff"/></svg>
<svg style="position:absolute;left:149px;top:16.5px;width:12px;height:7px;color:#2474f2;"><use href="#chevd2"/></svg>
<div style="position:absolute;left:177px;top:5.0px;line-height:30.0px;font-size:20px;color:#2474f2;white-space:nowrap;font-family:'Liberation Sans', sans-serif;"><span style="letter-spacing:-0.5px">PLC_1</span></div>
<div style="position:absolute;left:0;top:40px;width:1470px;height:40px;background:#fafafa"></div>
<svg style="position:absolute;left:47px;top:50px;width:21px;height:21px" viewBox="0 0 21 21"><circle cx="10.5" cy="10.5" r="10" fill="#0a5ed7"/><circle cx="10.5" cy="5.6" r="1.8" fill="#fff"/><rect x="8.9" y="8.6" width="3.2" height="7.6" fill="#fff"/></svg>
<svg style="position:absolute;left:179px;top:56.5px;width:12px;height:7px;color:#2474f2;"><use href="#chevd2"/></svg>
<div style="position:absolute;left:207px;top:45.0px;line-height:30.0px;font-size:20px;color:#2474f2;white-space:nowrap;font-family:'Liberation Sans', sans-serif;">软件</div>
<div style="position:absolute;left:0;top:80px;width:1470px;height:40px;background:#ffffff"></div>
<svg style="position:absolute;left:47px;top:90px;width:21px;height:21px" viewBox="0 0 21 21"><circle cx="10.5" cy="10.5" r="10" fill="#0a5ed7"/><circle cx="10.5" cy="5.6" r="1.8" fill="#fff"/><rect x="8.9" y="8.6" width="3.2" height="7.6" fill="#fff"/></svg>
<div style="position:absolute;left:236px;top:85.0px;line-height:30.0px;font-size:20px;color:#222;white-space:nowrap;font-family:'Liberation Sans', sans-serif;"><span style="letter-spacing:0.4px">gDownloadInfo</span>删除成功</div>
<div style="position:absolute;left:1126px;top:85.0px;line-height:30.0px;font-size:20px;color:#333;white-space:nowrap;font-family:'Liberation Sans', sans-serif;"><span style="letter-spacing:-0.5px">6:18:37 PM</span></div>
<div style="position:absolute;left:0;top:120px;width:1470px;height:40px;background:#fafafa"></div>
<svg style="position:absolute;left:47px;top:130px;width:21px;height:21px" viewBox="0 0 21 21"><circle cx="10.5" cy="10.5" r="10" fill="#0a5ed7"/><circle cx="10.5" cy="5.6" r="1.8" fill="#fff"/><rect x="8.9" y="8.6" width="3.2" height="7.6" fill="#fff"/></svg>
<div style="position:absolute;left:236px;top:125.0px;line-height:30.0px;font-size:20px;color:#2474f2;white-space:nowrap;font-family:'Liberation Sans', sans-serif;">全局变量集合<span style="letter-spacing:-0.5px">GVS</span></div>
<div style="position:absolute;left:0;top:160px;width:1470px;height:40px;background:#ffffff"></div>
<svg style="position:absolute;left:47px;top:170px;width:21px;height:21px" viewBox="0 0 21 21"><circle cx="10.5" cy="10.5" r="10" fill="#0a5ed7"/><circle cx="10.5" cy="5.6" r="1.8" fill="#fff"/><rect x="8.9" y="8.6" width="3.2" height="7.6" fill="#fff"/></svg>
<div style="position:absolute;left:236px;top:165.0px;line-height:30.0px;font-size:20px;color:#2474f2;white-space:nowrap;font-family:'Liberation Sans', sans-serif;">程序单元</div>
<div style="position:absolute;left:0;top:200px;width:1470px;height:40px;background:#fafafa"></div>
<svg style="position:absolute;left:47px;top:210px;width:21px;height:21px" viewBox="0 0 21 21"><circle cx="10.5" cy="10.5" r="10" fill="#0a5ed7"/><circle cx="10.5" cy="5.6" r="1.8" fill="#fff"/><rect x="8.9" y="8.6" width="3.2" height="7.6" fill="#fff"/></svg>
<svg style="position:absolute;left:208px;top:216.5px;width:12px;height:7px;color:#2474f2;"><use href="#chevd2"/></svg>
<div style="position:absolute;left:236px;top:205.0px;line-height:30.0px;font-size:20px;color:#2474f2;white-space:nowrap;font-family:'Liberation Sans', sans-serif;">任务</div>
<div style="position:absolute;left:0;top:240px;width:1470px;height:40px;background:#ffffff"></div>
<svg style="position:absolute;left:47px;top:250px;width:21px;height:21px" viewBox="0 0 21 21"><circle cx="10.5" cy="10.5" r="10" fill="#0a5ed7"/><circle cx="10.5" cy="5.6" r="1.8" fill="#fff"/><rect x="8.9" y="8.6" width="3.2" height="7.6" fill="#fff"/></svg>
<div style="position:absolute;left:266px;top:245.0px;line-height:30.0px;font-size:20px;color:#222;white-space:nowrap;font-family:'Liberation Sans', sans-serif;"><span style="letter-spacing:-1.2px">CYCLE_1</span>删除成功</div>
<div style="position:absolute;left:1126px;top:245.0px;line-height:30.0px;font-size:20px;color:#333;white-space:nowrap;font-family:'Liberation Sans', sans-serif;"><span style="letter-spacing:-0.5px">6:18:37 PM</span></div>
<div style="position:absolute;left:0;top:280px;width:1470px;height:40px;background:#fafafa"></div>
<svg style="position:absolute;left:47px;top:290px;width:21px;height:21px" viewBox="0 0 21 21"><circle cx="10.5" cy="10.5" r="10" fill="#0a5ed7"/><circle cx="10.5" cy="5.6" r="1.8" fill="#fff"/><rect x="8.9" y="8.6" width="3.2" height="7.6" fill="#fff"/></svg>
<div style="position:absolute;left:266px;top:285.0px;line-height:30.0px;font-size:20px;color:#222;white-space:nowrap;font-family:'Liberation Sans', sans-serif;"><span style="letter-spacing:-1.2px">CYCLE_3</span>删除成功</div>
<div style="position:absolute;left:1126px;top:285.0px;line-height:30.0px;font-size:20px;color:#333;white-space:nowrap;font-family:'Liberation Sans', sans-serif;"><span style="letter-spacing:-0.5px">6:18:37 PM</span></div>
<div style="position:absolute;left:0;top:320px;width:1470px;height:40px;background:#ffffff"></div>
<svg style="position:absolute;left:47px;top:330px;width:21px;height:21px" viewBox="0 0 21 21"><circle cx="10.5" cy="10.5" r="10" fill="#0a5ed7"/><circle cx="10.5" cy="5.6" r="1.8" fill="#fff"/><rect x="8.9" y="8.6" width="3.2" height="7.6" fill="#fff"/></svg>
<div style="position:absolute;left:266px;top:325.0px;line-height:30.0px;font-size:20px;color:#222;white-space:nowrap;font-family:'Liberation Sans', sans-serif;"><span style="letter-spacing:-1.2px">CYCLE_1</span>下载成功</div>
<div style="position:absolute;left:1126px;top:325.0px;line-height:30.0px;font-size:20px;color:#333;white-space:nowrap;font-family:'Liberation Sans', sans-serif;"><span style="letter-spacing:-0.5px">6:18:37 PM</span></div>
<div style="position:absolute;left:0;top:360px;width:1470px;height:40px;background:#fafafa"></div>
<svg style="position:absolute;left:47px;top:370px;width:21px;height:21px" viewBox="0 0 21 21"><circle cx="10.5" cy="10.5" r="10" fill="#0a5ed7"/><circle cx="10.5" cy="5.6" r="1.8" fill="#fff"/><rect x="8.9" y="8.6" width="3.2" height="7.6" fill="#fff"/></svg>
<div style="position:absolute;left:266px;top:365.0px;line-height:30.0px;font-size:20px;color:#222;white-space:nowrap;font-family:'Liberation Sans', sans-serif;"><span style="letter-spacing:-1.2px">CYCLE_3</span>下载成功</div>
<div style="position:absolute;left:1126px;top:365.0px;line-height:30.0px;font-size:20px;color:#333;white-space:nowrap;font-family:'Liberation Sans', sans-serif;"><span style="letter-spacing:-0.5px">6:18:37 PM</span></div>
<div style="position:absolute;left:0;top:400px;width:1470px;height:40px;background:#ffffff"></div>
<svg style="position:absolute;left:47px;top:410px;width:21px;height:21px" viewBox="0 0 21 21"><circle cx="10.5" cy="10.5" r="10" fill="#0a5ed7"/><circle cx="10.5" cy="5.6" r="1.8" fill="#fff"/><rect x="8.9" y="8.6" width="3.2" height="7.6" fill="#fff"/></svg>
<div style="position:absolute;left:236px;top:405.0px;line-height:30.0px;font-size:20px;color:#2474f2;white-space:nowrap;font-family:'Liberation Sans', sans-serif;"><span style="letter-spacing:-0.5px">IO</span>映射变量</div>
<div style="position:absolute;left:0;top:440px;width:1470px;height:40px;background:#fafafa"></div>
<svg style="position:absolute;left:47px;top:450px;width:21px;height:21px" viewBox="0 0 21 21"><circle cx="10.5" cy="10.5" r="10" fill="#0a5ed7"/><circle cx="10.5" cy="5.6" r="1.8" fill="#fff"/><rect x="8.9" y="8.6" width="3.2" height="7.6" fill="#fff"/></svg>
<div style="position:absolute;left:236px;top:445.0px;line-height:30.0px;font-size:20px;color:#2474f2;white-space:nowrap;font-family:'Liberation Sans', sans-serif;">用户数据类型</div>
<div style="position:absolute;left:0;top:480px;width:1470px;height:40px;background:#ffffff"></div>
<svg style="position:absolute;left:47px;top:490px;width:21px;height:21px" viewBox="0 0 21 21"><circle cx="10.5" cy="10.5" r="10" fill="#0a5ed7"/><circle cx="10.5" cy="5.6" r="1.8" fill="#fff"/><rect x="8.9" y="8.6" width="3.2" height="7.6" fill="#fff"/></svg>
<div style="position:absolute;left:236px;top:485.0px;line-height:30.0px;font-size:20px;color:#2474f2;white-space:nowrap;font-family:'Liberation Sans', sans-serif;">工艺控制</div>
</div>
<div style="position:absolute;left:599px;top:1389px;width:1470px;height:8px;background:linear-gradient(rgba(0,0,0,0.09),rgba(0,0,0,0));"></div>
<div style="position:absolute;left:2069px;top:1390px;width:8.5px;height:411px;background:#c8c8c8;border-radius:4px"></div>
<div style="position:absolute;left:2113px;top:80px;width:3px;height:1825px;background:#b3cffb;"></div>
<div style="position:absolute;left:2116px;top:80px;width:365px;height:1825px;background:#f6f9fe;"></div>
<div style="position:absolute;left:2116px;top:80px;width:365px;height:39.5px;background:#dce8fb;"></div>
<div style="position:absolute;left:2131px;top:86.0px;line-height:30.0px;font-size:20px;color:#111;white-space:nowrap;font-family:'Liberation Sans', sans-serif;">资源</div>
<svg style="position:absolute;left:2434px;top:96px;width:22px;height:17px" viewBox="0 0 22 17"><path d="M0 2 H9 M0 8 H9 M0 15 H21" stroke="#1f6ae6" stroke-width="2.6"/><path d="M11 0 H21 L16 6.5 Z" fill="#1f6ae6"/></svg>
<div style="position:absolute;left:2131px;top:128.5px;width:182px;height:41px;background:#ffffff;border-radius:5px;box-shadow:0 0 0 1px #eef1f6;"></div>
<div style="position:absolute;left:2148.5px;top:134.0px;line-height:30.0px;font-size:20px;color:#888;white-space:nowrap;font-family:'Liberation Sans', sans-serif;">搜索</div>
<svg style="position:absolute;left:2334px;top:139px;width:22px;height:22px" viewBox="0 0 22 22"><circle cx="9.5" cy="9.5" r="8" fill="none" stroke="#1f6ae6" stroke-width="1.9"/><path d="M15.5 15.5 L20.5 20.5" stroke="#1f6ae6" stroke-width="2.2"/></svg>
<svg style="position:absolute;left:2382px;top:137px;width:24px;height:25px" viewBox="0 0 24 25" fill="none" stroke="#2474f2" stroke-width="1.8" stroke-linejoin="round"><g transform="rotate(-45 12 12.5)"><rect x="8.6" y="0.5" width="6.8" height="24" rx="1.2"/><path d="M8.6 5.5 H11 M8.6 9.5 H11 M8.6 15.5 H11 M8.6 19.5 H11" stroke-width="1.4"/></g><g transform="rotate(45 12 12.5)"><path d="M9.8 0.5 H14.2 V19.5 L12 24.5 L9.8 19.5 Z" fill="#f6f9fe"/><path d="M9.8 3.5 H14.2" stroke-width="1.4"/></g></svg>
<div style="position:absolute;left:2424px;top:130px;width:39.5px;height:38.5px;background:#d2e1f9;border-radius:5px;"></div>
<svg style="position:absolute;left:2434px;top:139px;width:20px;height:20px" viewBox="0 0 20 20"><path d="M0 2 H20 M0 9 H6 M0 16 H6" stroke="#1f6ae6" stroke-width="2.4"/><path d="M13.5 6.5 L15.3 10 L19.2 10.5 L16.4 13.2 L17.1 17 L13.5 15.2 L9.9 17 L10.6 13.2 L7.8 10.5 L11.7 10 Z" fill="#1f6ae6"/></svg>
<div style="position:absolute;left:2116px;top:178px;width:365px;height:36.5px;background:#e2ebfc;border-radius:6px;"></div>
<div style="position:absolute;left:2120.5px;top:180.4px;line-height:30.0px;font-size:20px;color:#2474f2;white-space:nowrap;font-family:'Liberation Sans', sans-serif;font-weight:bold;">基础指令</div>
<svg style="position:absolute;left:2454px;top:192px;width:17px;height:10px;color:#2474f2;"><use href="#chevd"/></svg>
<div style="position:absolute;left:2118px;top:218px;width:360px;height:36.5px;background:#f0f1f5;border-radius:6px;"></div>
<svg style="position:absolute;left:2132px;top:228.5px;width:9px;height:16px;color:#1e1e1e;"><use href="#chevr"/></svg>
<svg style="position:absolute;left:2154px;top:227.5px;width:19px;height:17px;color:#1e1e1e;"><use href="#fold2"/></svg>
<div style="position:absolute;left:2183.5px;top:221.5px;line-height:30.0px;font-size:20px;color:#1e1e1e;white-space:nowrap;font-family:'Liberation Sans', sans-serif;">常规及连接元素</div>
<div style="position:absolute;left:2118px;top:258px;width:360px;height:36.5px;background:#f0f1f5;border-radius:6px;"></div>
<svg style="position:absolute;left:2132px;top:268.5px;width:9px;height:16px;color:#1e1e1e;"><use href="#chevr"/></svg>
<svg style="position:absolute;left:2154px;top:267.5px;width:19px;height:17px;color:#1e1e1e;"><use href="#fold2"/></svg>
<div style="position:absolute;left:2183.5px;top:261.5px;line-height:30.0px;font-size:20px;color:#1e1e1e;white-space:nowrap;font-family:'Liberation Sans', sans-serif;">布尔指令</div>
<div style="position:absolute;left:2118px;top:298px;width:360px;height:36.5px;background:#f0f1f5;border-radius:6px;"></div>
<svg style="position:absolute;left:2132px;top:308.5px;width:9px;height:16px;color:#1e1e1e;"><use href="#chevr"/></svg>
<svg style="position:absolute;left:2154px;top:307.5px;width:19px;height:17px;color:#1e1e1e;"><use href="#fold2"/></svg>
<div style="position:absolute;left:2183.5px;top:301.5px;line-height:30.0px;font-size:20px;color:#1e1e1e;white-space:nowrap;font-family:'Liberation Sans', sans-serif;">跳转指令</div>
<div style="position:absolute;left:2118px;top:338px;width:360px;height:36.5px;background:#f0f1f5;border-radius:6px;"></div>
<svg style="position:absolute;left:2132px;top:348.5px;width:9px;height:16px;color:#1e1e1e;"><use href="#chevr"/></svg>
<svg style="position:absolute;left:2154px;top:347.5px;width:19px;height:17px;color:#1e1e1e;"><use href="#fold2"/></svg>
<div style="position:absolute;left:2183.5px;top:341.5px;line-height:30.0px;font-size:20px;color:#1e1e1e;white-space:nowrap;font-family:'Liberation Sans', sans-serif;">算术指令</div>
<div style="position:absolute;left:2118px;top:378px;width:360px;height:36.5px;background:#f0f1f5;border-radius:6px;"></div>
<svg style="position:absolute;left:2132px;top:388.5px;width:9px;height:16px;color:#1e1e1e;"><use href="#chevr"/></svg>
<svg style="position:absolute;left:2154px;top:387.5px;width:19px;height:17px;color:#1e1e1e;"><use href="#fold2"/></svg>
<div style="position:absolute;left:2183.5px;top:381.5px;line-height:30.0px;font-size:20px;color:#1e1e1e;white-space:nowrap;font-family:'Liberation Sans', sans-serif;">位逻辑指令</div>
<div style="position:absolute;left:2118px;top:418px;width:360px;height:36.5px;background:#f0f1f5;border-radius:6px;"></div>
<svg style="position:absolute;left:2132px;top:428.5px;width:9px;height:16px;color:#1e1e1e;"><use href="#chevr"/></svg>
<svg style="position:absolute;left:2154px;top:427.5px;width:19px;height:17px;color:#1e1e1e;"><use href="#fold2"/></svg>
<div style="position:absolute;left:2183.5px;top:421.5px;line-height:30.0px;font-size:20px;color:#1e1e1e;white-space:nowrap;font-family:'Liberation Sans', sans-serif;">比较指令</div>
<div style="position:absolute;left:2116px;top:624.5px;width:365px;height:4px;background:#a9c8fb;"></div>
<div style="position:absolute;left:2116px;top:628.5px;width:365px;height:36.5px;background:#e2ebfc;border-radius:6px;"></div>
<div style="position:absolute;left:2120.5px;top:630.9px;line-height:30.0px;font-size:20px;color:#2474f2;white-space:nowrap;font-family:'Liberation Sans', sans-serif;font-weight:bold;">系统库初级指令</div>
<svg style="position:absolute;left:2454px;top:642.5px;width:17px;height:10px;color:#2474f2;"><use href="#chevd"/></svg>
<div style="position:absolute;left:2118px;top:668.0px;width:360px;height:36.5px;background:#f0f1f5;border-radius:6px;"></div>
<svg style="position:absolute;left:2132px;top:678.5px;width:9px;height:16px;color:#1e1e1e;"><use href="#chevr"/></svg>
<svg style="position:absolute;left:2154px;top:677.5px;width:19px;height:17px;color:#1e1e1e;"><use href="#fold2"/></svg>
<div style="position:absolute;left:2183.5px;top:671.5px;line-height:30.0px;font-size:20px;color:#1e1e1e;white-space:nowrap;font-family:'Liberation Sans', sans-serif;">布尔逻辑运算</div>
<div style="position:absolute;left:2382.5px;top:671.5px;line-height:30.0px;font-size:20px;color:#1e1e1e;white-space:nowrap;font-family:'Liberation Sans', sans-serif;"><span style="letter-spacing:-0.5px">V1.0</span></div>
<svg style="position:absolute;left:2441px;top:683.0px;width:12px;height:7px;color:#d4d6da;"><use href="#chevd"/></svg>
<div style="position:absolute;left:2118px;top:708.04px;width:360px;height:36.5px;background:#f0f1f5;border-radius:6px;"></div>
<svg style="position:absolute;left:2132px;top:718.54px;width:9px;height:16px;color:#1e1e1e;"><use href="#chevr"/></svg>
<svg style="position:absolute;left:2154px;top:717.54px;width:19px;height:17px;color:#1e1e1e;"><use href="#fold2"/></svg>
<div style="position:absolute;left:2183.5px;top:711.5px;line-height:30.0px;font-size:20px;color:#1e1e1e;white-space:nowrap;font-family:'Liberation Sans', sans-serif;">计数器</div>
<div style="position:absolute;left:2382.5px;top:711.5px;line-height:30.0px;font-size:20px;color:#1e1e1e;white-space:nowrap;font-family:'Liberation Sans', sans-serif;"><span style="letter-spacing:-0.5px">V1.0</span></div>
<svg style="position:absolute;left:2441px;top:723.04px;width:12px;height:7px;color:#d4d6da;"><use href="#chevd"/></svg>
<div style="position:absolute;left:2118px;top:748.08px;width:360px;height:36.5px;background:#f0f1f5;border-radius:6px;"></div>
<svg style="position:absolute;left:2132px;top:758.58px;width:9px;height:16px;color:#1e1e1e;"><use href="#chevr"/></svg>
<svg style="position:absolute;left:2154px;top:757.58px;width:19px;height:17px;color:#1e1e1e;"><use href="#fold2"/></svg>
<div style="position:absolute;left:2183.5px;top:751.6px;line-height:30.0px;font-size:20px;color:#1e1e1e;white-space:nowrap;font-family:'Liberation Sans', sans-serif;">定时器</div>
<div style="position:absolute;left:2382.5px;top:751.6px;line-height:30.0px;font-size:20px;color:#1e1e1e;white-space:nowrap;font-family:'Liberation Sans', sans-serif;"><span style="letter-spacing:-0.5px">V1.0</span></div>
<svg style="position:absolute;left:2441px;top:763.08px;width:12px;height:7px;color:#d4d6da;"><use href="#chevd"/></svg>
<div style="position:absolute;left:2118px;top:788.12px;width:360px;height:36.5px;background:#f0f1f5;border-radius:6px;"></div>
<svg style="position:absolute;left:2132px;top:798.62px;width:9px;height:16px;color:#1e1e1e;"><use href="#chevr"/></svg>
<svg style="position:absolute;left:2154px;top:797.62px;width:19px;height:17px;color:#1e1e1e;"><use href="#fold2"/></svg>
<div style="position:absolute;left:2183.5px;top:791.6px;line-height:30.0px;font-size:20px;color:#1e1e1e;white-space:nowrap;font-family:'Liberation Sans', sans-serif;">数值运算</div>
<div style="position:absolute;left:2382.5px;top:791.6px;line-height:30.0px;font-size:20px;color:#1e1e1e;white-space:nowrap;font-family:'Liberation Sans', sans-serif;"><span style="letter-spacing:-0.5px">V1.0</span></div>
<svg style="position:absolute;left:2441px;top:803.12px;width:12px;height:7px;color:#d4d6da;"><use href="#chevd"/></svg>
<div style="position:absolute;left:2118px;top:828.16px;width:360px;height:36.5px;background:#f0f1f5;border-radius:6px;"></div>
<svg style="position:absolute;left:2132px;top:838.66px;width:9px;height:16px;color:#1e1e1e;"><use href="#chevr"/></svg>
<svg style="position:absolute;left:2154px;top:837.66px;width:19px;height:17px;color:#1e1e1e;"><use href="#fold2"/></svg>
<div style="position:absolute;left:2183.5px;top:831.7px;line-height:30.0px;font-size:20px;color:#1e1e1e;white-space:nowrap;font-family:'Liberation Sans', sans-serif;">串移位运算</div>
<div style="position:absolute;left:2382.5px;top:831.7px;line-height:30.0px;font-size:20px;color:#1e1e1e;white-space:nowrap;font-family:'Liberation Sans', sans-serif;"><span style="letter-spacing:-0.5px">V1.0</span></div>
<svg style="position:absolute;left:2441px;top:843.16px;width:12px;height:7px;color:#d4d6da;"><use href="#chevd"/></svg>
<div style="position:absolute;left:2118px;top:868.2px;width:360px;height:36.5px;background:#f0f1f5;border-radius:6px;"></div>
<svg style="position:absolute;left:2132px;top:878.7px;width:9px;height:16px;color:#1e1e1e;"><use href="#chevr"/></svg>
<svg style="position:absolute;left:2154px;top:877.7px;width:19px;height:17px;color:#1e1e1e;"><use href="#fold2"/></svg>
<div style="position:absolute;left:2183.5px;top:871.7px;line-height:30.0px;font-size:20px;color:#1e1e1e;white-space:nowrap;font-family:'Liberation Sans', sans-serif;">位组装指令</div>
<div style="position:absolute;left:2382.5px;top:871.7px;line-height:30.0px;font-size:20px;color:#1e1e1e;white-space:nowrap;font-family:'Liberation Sans', sans-serif;"><span style="letter-spacing:-0.5px">V1.0</span></div>
<svg style="position:absolute;left:2441px;top:883.2px;width:12px;height:7px;color:#d4d6da;"><use href="#chevd"/></svg>
<div style="position:absolute;left:2118px;top:908.24px;width:360px;height:36.5px;background:#f0f1f5;border-radius:6px;"></div>
<svg style="position:absolute;left:2132px;top:918.74px;width:9px;height:16px;color:#1e1e1e;"><use href="#chevr"/></svg>
<svg style="position:absolute;left:2154px;top:917.74px;width:19px;height:17px;color:#1e1e1e;"><use href="#fold2"/></svg>
<div style="position:absolute;left:2183.5px;top:911.7px;line-height:30.0px;font-size:20px;color:#1e1e1e;white-space:nowrap;font-family:'Liberation Sans', sans-serif;">选择语句</div>
<div style="position:absolute;left:2382.5px;top:911.7px;line-height:30.0px;font-size:20px;color:#1e1e1e;white-space:nowrap;font-family:'Liberation Sans', sans-serif;"><span style="letter-spacing:-0.5px">V1.0</span></div>
<svg style="position:absolute;left:2441px;top:923.24px;width:12px;height:7px;color:#d4d6da;"><use href="#chevd"/></svg>
<div style="position:absolute;left:2118px;top:948.28px;width:360px;height:36.5px;background:#f0f1f5;border-radius:6px;"></div>
<svg style="position:absolute;left:2132px;top:958.78px;width:9px;height:16px;color:#1e1e1e;"><use href="#chevr"/></svg>
<svg style="position:absolute;left:2154px;top:957.78px;width:19px;height:17px;color:#1e1e1e;"><use href="#fold2"/></svg>
<div style="position:absolute;left:2183.5px;top:951.8px;line-height:30.0px;font-size:20px;color:#1e1e1e;white-space:nowrap;font-family:'Liberation Sans', sans-serif;">比较语句</div>
<div style="position:absolute;left:2382.5px;top:951.8px;line-height:30.0px;font-size:20px;color:#1e1e1e;white-space:nowrap;font-family:'Liberation Sans', sans-serif;"><span style="letter-spacing:-0.5px">V1.0</span></div>
<svg style="position:absolute;left:2441px;top:963.28px;width:12px;height:7px;color:#d4d6da;"><use href="#chevd"/></svg>
<div style="position:absolute;left:2118px;top:988.3199999999999px;width:360px;height:36.5px;background:#f0f1f5;border-radius:6px;"></div>
<svg style="position:absolute;left:2132px;top:998.8199999999999px;width:9px;height:16px;color:#1e1e1e;"><use href="#chevr"/></svg>
<svg style="position:absolute;left:2154px;top:997.8199999999999px;width:19px;height:17px;color:#1e1e1e;"><use href="#fold2"/></svg>
<div style="position:absolute;left:2183.5px;top:991.8px;line-height:30.0px;font-size:20px;color:#1e1e1e;white-space:nowrap;font-family:'Liberation Sans', sans-serif;">字符串运算</div>
<div style="position:absolute;left:2382.5px;top:991.8px;line-height:30.0px;font-size:20px;color:#1e1e1e;white-space:nowrap;font-family:'Liberation Sans', sans-serif;"><span style="letter-spacing:-0.5px">V1.0</span></div>
<svg style="position:absolute;left:2441px;top:1003.3199999999999px;width:12px;height:7px;color:#d4d6da;"><use href="#chevd"/></svg>
<div style="position:absolute;left:2118px;top:1028.3600000000001px;width:360px;height:36.5px;background:#f0f1f5;border-radius:6px;"></div>
<svg style="position:absolute;left:2132px;top:1038.8600000000001px;width:9px;height:16px;color:#1e1e1e;"><use href="#chevr"/></svg>
<svg style="position:absolute;left:2154px;top:1037.8600000000001px;width:19px;height:17px;color:#1e1e1e;"><use href="#fold2"/></svg>
<div style="position:absolute;left:2183.5px;top:1031.9px;line-height:30.0px;font-size:20px;color:#1e1e1e;white-space:nowrap;font-family:'Liberation Sans', sans-serif;">数据转换语句</div>
<div style="position:absolute;left:2382.5px;top:1031.9px;line-height:30.0px;font-size:20px;color:#1e1e1e;white-space:nowrap;font-family:'Liberation Sans', sans-serif;"><span style="letter-spacing:-0.5px">V1.0</span></div>
<svg style="position:absolute;left:2441px;top:1043.3600000000001px;width:12px;height:7px;color:#d4d6da;"><use href="#chevd"/></svg>
<div style="position:absolute;left:2118px;top:1068.4px;width:360px;height:36.5px;background:#f0f1f5;border-radius:6px;"></div>
<svg style="position:absolute;left:2132px;top:1078.9px;width:9px;height:16px;color:#1e1e1e;"><use href="#chevr"/></svg>
<svg style="position:absolute;left:2154px;top:1077.9px;width:19px;height:17px;color:#1e1e1e;"><use href="#fold2"/></svg>
<div style="position:absolute;left:2183.5px;top:1071.9px;line-height:30.0px;font-size:20px;color:#1e1e1e;white-space:nowrap;font-family:'Liberation Sans', sans-serif;">数组及结构体函数</div>
<div style="position:absolute;left:2382.5px;top:1071.9px;line-height:30.0px;font-size:20px;color:#1e1e1e;white-space:nowrap;font-family:'Liberation Sans', sans-serif;"><span style="letter-spacing:-0.5px">V1.0</span></div>
<svg style="position:absolute;left:2441px;top:1083.4px;width:12px;height:7px;color:#d4d6da;"><use href="#chevd"/></svg>
<div style="position:absolute;left:2118px;top:1108.44px;width:360px;height:36.5px;background:#f0f1f5;border-radius:6px;"></div>
<svg style="position:absolute;left:2132px;top:1118.94px;width:9px;height:16px;color:#1e1e1e;"><use href="#chevr"/></svg>
<svg style="position:absolute;left:2154px;top:1117.94px;width:19px;height:17px;color:#1e1e1e;"><use href="#fold2"/></svg>
<div style="position:absolute;left:2183.5px;top:1111.9px;line-height:30.0px;font-size:20px;color:#1e1e1e;white-space:nowrap;font-family:'Liberation Sans', sans-serif;">标准验证功能</div>
<div style="position:absolute;left:2382.5px;top:1111.9px;line-height:30.0px;font-size:20px;color:#1e1e1e;white-space:nowrap;font-family:'Liberation Sans', sans-serif;"><span style="letter-spacing:-0.5px">V1.0</span></div>
<svg style="position:absolute;left:2441px;top:1123.44px;width:12px;height:7px;color:#d4d6da;"><use href="#chevd"/></svg>
<div style="position:absolute;left:2116px;top:1501px;width:365px;height:4px;background:#a9c8fb;"></div>
<div style="position:absolute;left:2116px;top:1505px;width:365px;height:36.5px;background:#e2ebfc;border-radius:6px;"></div>
<div style="position:absolute;left:2120.5px;top:1507.4px;line-height:30.0px;font-size:20px;color:#2474f2;white-space:nowrap;font-family:'Liberation Sans', sans-serif;font-weight:bold;">系统库高级指令</div>
<svg style="position:absolute;left:2454px;top:1519px;width:17px;height:10px;color:#2474f2;"><use href="#chevd"/></svg>
<div style="position:absolute;left:0;top:0;width:2538px;height:1938px;clip-path:inset(1541px 57px 282px 2116px)">
<div style="position:absolute;left:2118px;top:1544px;width:350px;height:36.5px;background:#f0f1f5;border-radius:6px;"></div>
<svg style="position:absolute;left:2132px;top:1554.5px;width:9px;height:16px;color:#1e1e1e;"><use href="#chevr"/></svg>
<svg style="position:absolute;left:2154px;top:1553.5px;width:19px;height:17px;color:#1e1e1e;"><use href="#fold2"/></svg>
<div style="position:absolute;left:2183.5px;top:1547.5px;line-height:30.0px;font-size:20px;color:#1e1e1e;white-space:nowrap;font-family:'Liberation Sans', sans-serif;">日期和时间函数</div>
<div style="position:absolute;left:2373.5px;top:1547.5px;line-height:30.0px;font-size:20px;color:#1e1e1e;white-space:nowrap;font-family:'Liberation Sans', sans-serif;"><span style="letter-spacing:-0.5px">V1.0</span></div>
<svg style="position:absolute;left:2432px;top:1559px;width:12px;height:7px;color:#d4d6da;"><use href="#chevd"/></svg>
<div style="position:absolute;left:2118px;top:1584px;width:350px;height:36.5px;background:#f0f1f5;border-radius:6px;"></div>
<svg style="position:absolute;left:2132px;top:1594.5px;width:9px;height:16px;color:#1e1e1e;"><use href="#chevr"/></svg>
<svg style="position:absolute;left:2154px;top:1593.5px;width:19px;height:17px;color:#1e1e1e;"><use href="#fold2"/></svg>
<div style="position:absolute;left:2183.5px;top:1587.5px;line-height:30.0px;font-size:20px;color:#1e1e1e;white-space:nowrap;font-family:'Liberation Sans', sans-serif;">系统与诊断函数</div>
<div style="position:absolute;left:2373.5px;top:1587.5px;line-height:30.0px;font-size:20px;color:#1e1e1e;white-space:nowrap;font-family:'Liberation Sans', sans-serif;"><span style="letter-spacing:-0.5px">V1.0</span></div>
<svg style="position:absolute;left:2432px;top:1599px;width:12px;height:7px;color:#d4d6da;"><use href="#chevd"/></svg>
<div style="position:absolute;left:2118px;top:1624px;width:350px;height:36.5px;background:#f0f1f5;border-radius:6px;"></div>
<svg style="position:absolute;left:2132px;top:1634.5px;width:9px;height:16px;color:#1e1e1e;"><use href="#chevr"/></svg>
<svg style="position:absolute;left:2154px;top:1633.5px;width:19px;height:17px;color:#1e1e1e;"><use href="#fold2"/></svg>
<div style="position:absolute;left:2183.5px;top:1627.5px;line-height:30.0px;font-size:20px;color:#1e1e1e;white-space:nowrap;font-family:'Liberation Sans', sans-serif;">通讯函数</div>
<div style="position:absolute;left:2373.5px;top:1627.5px;line-height:30.0px;font-size:20px;color:#1e1e1e;white-space:nowrap;font-family:'Liberation Sans', sans-serif;"><span style="letter-spacing:-0.5px">V1.0</span></div>
<svg style="position:absolute;left:2432px;top:1639px;width:12px;height:7px;color:#d4d6da;"><use href="#chevd"/></svg>
</div>
<div style="position:absolute;left:2472px;top:1541px;width:8.5px;height:112px;background:#c4c4c4;border-radius:4px"></div>
<div style="position:absolute;left:2116px;top:1658.5px;width:365px;height:4px;background:#a9c8fb;"></div>
<div style="position:absolute;left:2116px;top:1662.5px;width:365px;height:36.5px;background:#e2ebfc;border-radius:6px;"></div>
<div style="position:absolute;left:2120.5px;top:1664.9px;line-height:30.0px;font-size:20px;color:#2474f2;white-space:nowrap;font-family:'Liberation Sans', sans-serif;font-weight:bold;">系统库工艺指令</div>
<svg style="position:absolute;left:2454px;top:1676.5px;width:17px;height:10px;color:#2474f2;"><use href="#chevd"/></svg>
<div style="position:absolute;left:2118px;top:1702px;width:360px;height:36.5px;background:#f0f1f5;border-radius:6px;"></div>
<svg style="position:absolute;left:2132px;top:1712.5px;width:9px;height:16px;color:#1e1e1e;"><use href="#chevr"/></svg>
<svg style="position:absolute;left:2154px;top:1711.5px;width:19px;height:17px;color:#1e1e1e;"><use href="#fold2"/></svg>
<div style="position:absolute;left:2183.5px;top:1705.5px;line-height:30.0px;font-size:20px;color:#1e1e1e;white-space:nowrap;font-family:'Liberation Sans', sans-serif;">单轴函数</div>
<div style="position:absolute;left:2382.5px;top:1705.5px;line-height:30.0px;font-size:20px;color:#1e1e1e;white-space:nowrap;font-family:'Liberation Sans', sans-serif;"><span style="letter-spacing:-0.5px">V1.0</span></div>
<svg style="position:absolute;left:2441px;top:1717px;width:12px;height:7px;color:#d4d6da;"><use href="#chevd"/></svg>
<div style="position:absolute;left:2116px;top:1781.5px;width:365px;height:4px;background:#a9c8fb;"></div>
<div style="position:absolute;left:2116px;top:1785.5px;width:365px;height:36.5px;background:#e2ebfc;border-radius:6px;"></div>
<div style="position:absolute;left:2120.5px;top:1787.9px;line-height:30.0px;font-size:20px;color:#2474f2;white-space:nowrap;font-family:'Liberation Sans', sans-serif;font-weight:bold;">用户库</div>
<svg style="position:absolute;left:2454px;top:1799.5px;width:17px;height:10px;color:#2474f2;"><use href="#chevd"/></svg>
<div style="position:absolute;left:2163px;top:1820.0px;line-height:30.0px;font-size:20px;color:#333;white-space:nowrap;font-family:'Liberation Sans', sans-serif;font-weight:bold;">无符合条件函数</div>
<div style="position:absolute;left:2484px;top:80px;width:54px;height:1825px;background:#dce8fb;"></div>
<div style="position:absolute;left:2481px;top:80px;width:3px;height:1825px;background:#a9c8fb;"></div>
<div style="position:absolute;left:2484px;top:140px;width:54px;height:2px;background:#a6badb;"></div>
<div style="position:absolute;left:2484px;top:142px;width:54px;height:56px;background:#bfd6fa;"></div>
<div style="position:absolute;left:2484px;top:197px;width:54px;height:2px;background:#e6effd;"></div>
<svg style="position:absolute;left:2499px;top:96px;width:28px;height:28px" viewBox="0 0 28 28" fill="none" stroke="#f59a0e" stroke-width="1.3"><rect x="10.5" y="1" width="16.5" height="19.5" rx="0.6"/><path d="M17 3 V8.5 M19 3 V8.5 M21.5 3.5 H24.5 V8.5 H21.5 Z M18.5 11.5 H25 M18.5 14 H25 M18.5 17 H25" stroke-dasharray=""/><rect x="1" y="10.5" width="16" height="10.5" rx="2.5" fill="#dce8fb"/><path d="M5 15.5 L8 18 L13 13" /><path d="M9 21 V24 M1 25.2 H4.5 M13.5 25.2 H17"/><rect x="7" y="23.5" width="4" height="3.5" fill="#f59a0e" stroke="none"/></svg>
<svg style="position:absolute;left:2493px;top:153px;width:35px;height:35px" viewBox="0 0 35 35"><rect x="0" y="0" width="15" height="13" rx="5" fill="#2154b0"/><rect x="20" y="0" width="15" height="17.5" rx="5" fill="#0a5ed7"/><rect x="0" y="17.5" width="15" height="17.5" rx="5" fill="#0a5ed7"/><rect x="20" y="22" width="15" height="13" rx="5" fill="#0a5ed7"/><path d="M1 31 Q2 35 7 35 H10 Q14 35 15 31" fill="#2154b0"/><path d="M21 31 Q22 35 27 35 H30 Q34 35 35 31" fill="#2154b0"/><path d="M21 13.5 Q22 17.5 27 17.5 H30 Q34 17.5 35 13.5" fill="#2154b0"/></svg>
<div style="position:absolute;left:2219px;top:1850px;width:299px;height:70px;background:#fff5ef;box-shadow:0 0 0 4px rgba(248,222,200,0.75),0 0 14px 6px rgba(190,175,165,0.35);border-radius:3px"></div>
<div style="position:absolute;left:2246.5px;top:1862.0px;line-height:30.0px;font-size:20px;color:#111;white-space:nowrap;font-family:'Liberation Sans', sans-serif;"><span style="letter-spacing:-1.5px">PLC_1&nbsp;&nbsp;&nbsp;&nbsp;admin(</span>完全访问权限<span style="letter-spacing:-1.5px">)</span></div>
<div style="position:absolute;left:0;top:1905px;width:2538px;height:33px;background:#0a78d0;overflow:hidden">
<div style="position:absolute;left:21px;top:5px;line-height:34px;font-size:20px;color:#fff;white-space:nowrap;">语言服务空闲</div>
<svg style="position:absolute;left:162px;top:11px;width:21px;height:21px" viewBox="0 0 21 21"><circle cx="10.5" cy="10.5" r="9.3" fill="none" stroke="#fff" stroke-width="1.6"/><path d="M6.5 6.5 L14.5 14.5 M14.5 6.5 L6.5 14.5" stroke="#fff" stroke-width="1.6"/></svg>
<div style="position:absolute;left:188px;top:5px;line-height:34px;font-size:21px;color:#fff;white-space:nowrap;"><span style="letter-spacing:-0.5px">0</span></div>
<svg style="position:absolute;left:205px;top:8px;width:22px;height:21px" viewBox="0 0 22 21"><path d="M11 1.5 L21 19.5 H1 Z" fill="none" stroke="#fff" stroke-width="1.7" stroke-linejoin="round"/><path d="M11 7.5 V13.5" stroke="#fff" stroke-width="1.8"/><circle cx="11" cy="16.3" r="1.1" fill="#fff"/></svg>
<div style="position:absolute;left:233px;top:5px;line-height:34px;font-size:21px;color:#fff;white-space:nowrap;"><span style="letter-spacing:-0.5px">0</span></div>
<div style="position:absolute;left:263px;top:5px;line-height:34px;font-size:20.5px;color:#fff;white-space:nowrap;"><span style="letter-spacing:-0.3px">ClientID-6373dc2e-2a86-4c49-8e7d-1dbbeb8458b8</span></div>
<svg style="position:absolute;left:2258px;top:8px;width:19px;height:24px" viewBox="0 0 19 24"><path d="M9 3 Q3 3 3 10 V15 L1 18 H17 L15 15 V10" fill="none" stroke="#fff" stroke-width="1.8"/><path d="M6.5 20 Q9 23 11.5 20" fill="none" stroke="#fff" stroke-width="1.8"/><circle cx="14.5" cy="5.5" r="4" fill="#fff"/></svg>
<div style="position:absolute;left:2284px;top:5px;line-height:34px;font-size:21px;color:#fff;white-space:nowrap;"><span style="letter-spacing:0px">9</span></div>
<svg style="position:absolute;left:2316px;top:11px;width:22px;height:18px" viewBox="0 0 22 18"><rect x="1" y="1" width="20" height="16" fill="none" stroke="#fff" stroke-width="1.8"/><path d="M1 5.5 H21" stroke="#fff" stroke-width="1.8"/></svg>
<svg style="position:absolute;left:2367px;top:4px;width:28px;height:28px" viewBox="0 0 28 28" fill="none" stroke="#fff" stroke-width="1.5"><rect x="11" y="1" width="16" height="19" rx="0.5"/><path d="M17 3 V8 M19 3 V8 M21.5 3.5 H24.5 V8 H21.5 Z M19 11 H25 M19 14 H25 M19 17 H25"/><rect x="1" y="11" width="16" height="10.5" rx="2.5" fill="#0a78d0"/><path d="M5 16 L8 18.5 L13 13.5"/><path d="M9 21.5 V25"/></svg>
<div style="position:absolute;left:2411px;top:1px;line-height:34px;font-size:18.5px;color:#fff;white-space:nowrap;">在线设备</div>
<div style="position:absolute;left:2503px;top:1px;line-height:34px;font-size:21px;color:#fff;white-space:nowrap;font-weight:bold">1</div>
</div>
<svg style="position:absolute;left:0;top:0;width:6px;height:6px" viewBox="0 0 6 6"><path d="M0 0 H4.5 L0 4.5 Z" fill="#5d5d5d"/></svg>
<svg style="position:absolute;left:2532px;top:0;width:6px;height:6px" viewBox="0 0 6 6"><path d="M1.5 0 H6 V4.5 Z" fill="#5d5d5d"/></svg>
</body></html>
